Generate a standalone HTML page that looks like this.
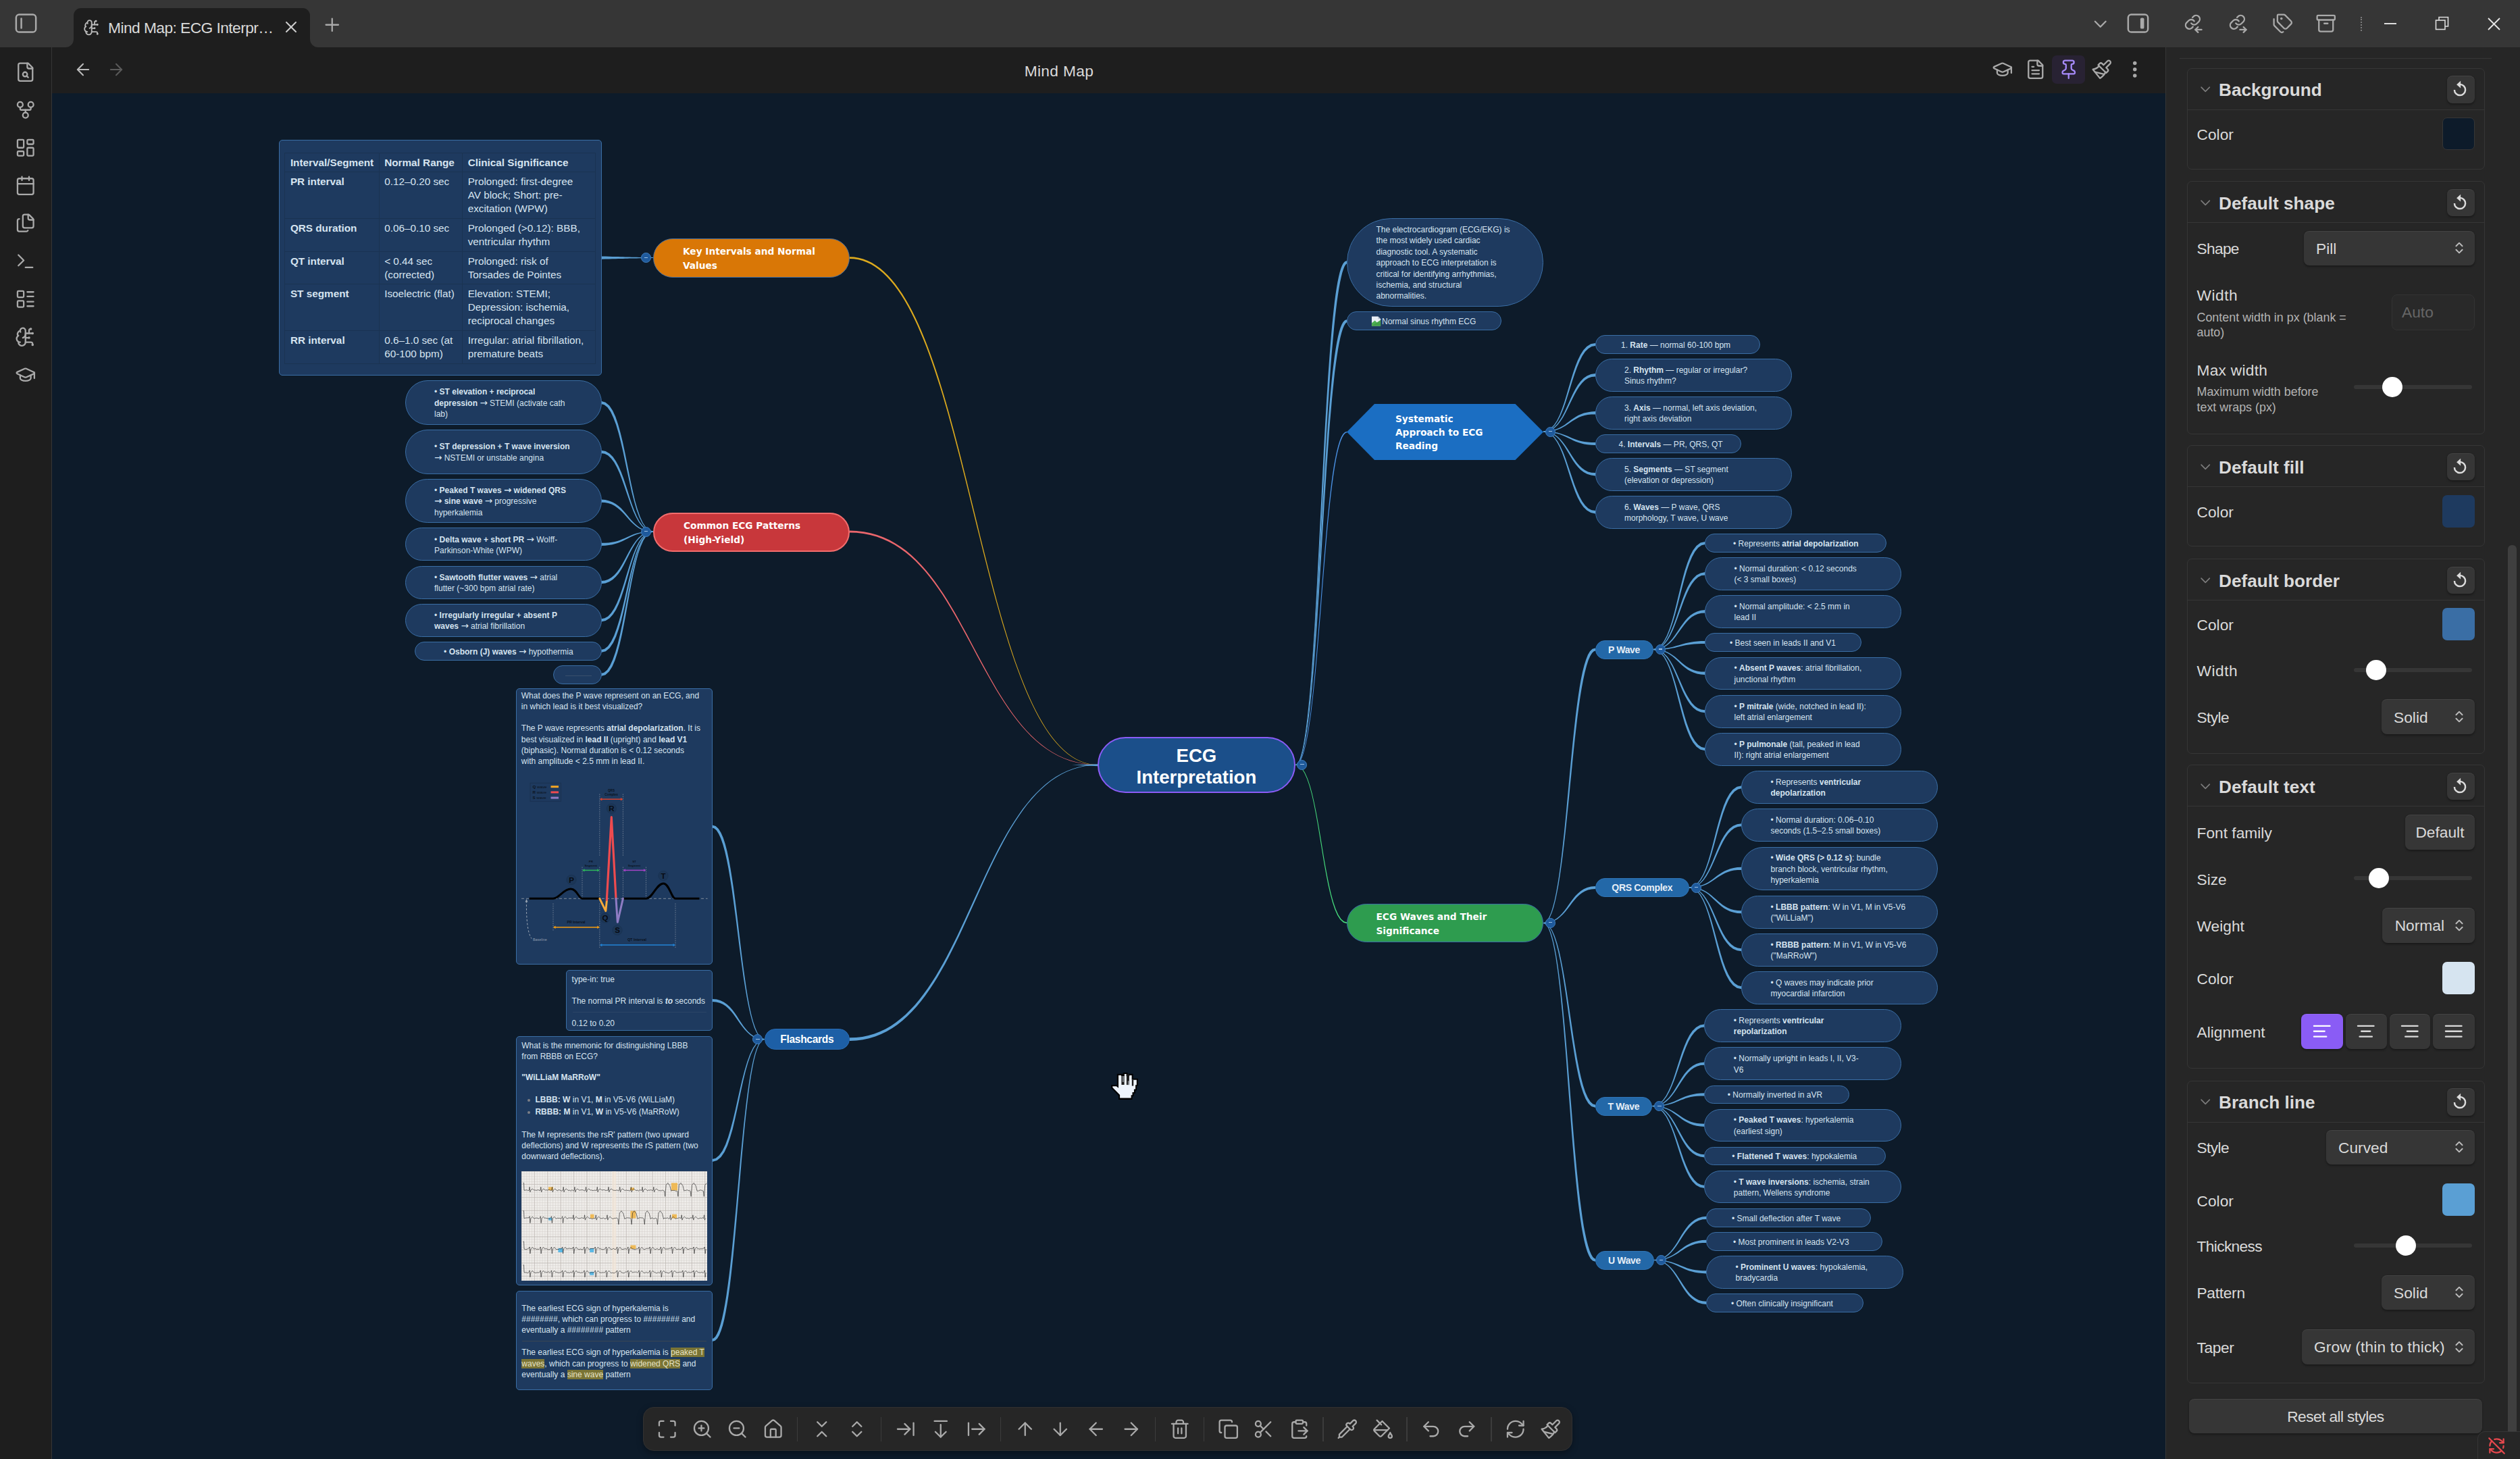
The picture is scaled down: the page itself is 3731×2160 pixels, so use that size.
<!DOCTYPE html><html><head><meta charset="utf-8"><title>Mind Map: ECG Interpretation</title><style>
*{box-sizing:border-box}
html,body{margin:0;padding:0}
body{width:3731px;height:2160px;overflow:hidden;background:#1e1e1e;font-family:"Liberation Sans",sans-serif;color:#dadada;position:relative}
.abs{position:absolute}
.ui{font-size:22.75px;white-space:nowrap;color:#dadada}
.nd{position:absolute;background:#1e3a5f;border:1.5px solid #3a6ea5;color:#d6e4f0;font-size:12px;line-height:16.4px;white-space:nowrap;display:flex;align-items:center;padding-top:2.2px}
.pill{border-radius:999px;padding-left:42px}
.card{border-radius:5px;display:block;padding:0}
.sub{position:absolute;background:#2368a8;border:1.5px solid #2f74b5;border-radius:999px;color:#e6eef7;font-weight:bold;font-size:14px;letter-spacing:-.32px;display:flex;align-items:center;justify-content:center;white-space:nowrap}
.top{position:absolute;border-radius:999px;color:#fff;font-family:"DejaVu Sans",sans-serif;font-weight:bold;font-size:13.7px;line-height:21px;display:flex;align-items:center;white-space:nowrap;padding-left:43px;padding-top:2.5px}
.cc{position:absolute;width:15px;height:15px;border-radius:50%;background:#1f5a9c;border:1.5px solid #3f7fc0}
.cc:after{content:"";position:absolute;left:3.7px;right:3.7px;top:5.4px;height:1.1px;background:#9cc0e4}
b{font-weight:bold}
.pcard{position:absolute;left:3238px;width:441px;border:1.5px solid #363636;border-radius:7px}
.pcard .hd{position:absolute;left:0;right:0;top:0;height:61px;border-bottom:1.5px solid #363636}
.ptitle{position:absolute;left:3285px;font-weight:bold;font-size:26.2px;white-space:nowrap;color:#dadada;line-height:30px}
.plabel{position:absolute;left:3252.5px;font-size:22.75px;white-space:nowrap;color:#dadada;line-height:28px}
.pdesc{position:absolute;left:3252.5px;font-size:17.9px;white-space:nowrap;color:#b3b3b3;line-height:22.7px}
.btn{padding-top:2.5px;position:absolute;background:#363636;border-radius:8px;box-shadow:0 1.5px 3px rgba(0,0,0,.35),inset 0 1px 0 rgba(255,255,255,.07);font-size:22.75px;color:#dadada;white-space:nowrap;display:flex;align-items:center}
.sw{position:absolute;left:3615.5px;width:48px;height:48px;border-radius:7px}
.trk{position:absolute;left:3485px;width:175px;height:6px;border-radius:3px;background:#363636}
.thm{position:absolute;width:30px;height:30px;border-radius:50%;background:#fff}
</style></head><body>
<div class="abs" style="left:0;top:0;width:3731px;height:70px;background:#363636"></div>
<div class="abs" style="left:109px;top:12px;width:350px;height:58px;background:#1e1e1e;border-radius:11px 11px 0 0"></div>
<svg class="abs" style="left:97px;top:58px" width="12" height="12"><path d="M12 0V12H0A12 12 0 0 0 12 0Z" fill="#1e1e1e"/></svg>
<svg class="abs" style="left:459px;top:58px" width="12" height="12"><path d="M0 0V12H12A12 12 0 0 1 0 0Z" fill="#1e1e1e"/></svg>
<svg style="position:absolute;left:20.2px;top:16.1px;color:#aaa;" width="37" height="37" viewBox="0 0 24 24" fill="none" stroke="currentColor" stroke-width="1.6" stroke-linecap="round" stroke-linejoin="round"><rect x="2.5" y="3.5" width="19" height="17" rx="3"/><path d="M7.500 7.500v9"/></svg>
<svg style="position:absolute;left:122.8px;top:27.5px;color:#bbb;" width="25.5" height="25.5" viewBox="0 0 24 24" fill="none" stroke="currentColor" stroke-width="1.75" stroke-linecap="round" stroke-linejoin="round"><path d="M12 5a3 3 0 1 0-5.997.125 4 4 0 0 0-2.526 5.770 4 4 0 0 0 .556 6.588A4 4 0 1 0 12 18Z"/><path d="M9 13a4.500 4.500 0 0 0 3-4"/><path d="M6.003 5.125A3 3 0 0 0 6.401 6.500"/><path d="M3.477 10.896a4 4 0 0 1 .585-.396"/><path d="M6 18a4 4 0 0 1-1.967-.516"/><path d="M12 13h4"/><path d="M12 18h6a2 2 0 0 1 2 2v1"/><path d="M12 8h8"/><path d="M16 8V5a2 2 0 0 1 2-2"/><circle cx="16" cy="13" r=".5"/><circle cx="18" cy="3" r=".5"/><circle cx="20" cy="21" r=".5"/><circle cx="20" cy="8" r=".5"/></svg>
<div class="abs ui" style="left:160px;top:26px;line-height:30px;letter-spacing:-0.55px">Mind Map: ECG Interpr…</div>
<svg style="position:absolute;left:417.0px;top:25.5px;color:#ccc;" width="28" height="28" viewBox="0 0 24 24" fill="none" stroke="currentColor" stroke-width="1.75" stroke-linecap="round" stroke-linejoin="round"><path d="M18 6 6 18"/><path d="m6 6 12 12"/></svg>
<svg style="position:absolute;left:475.8px;top:21.2px;color:#aaa;" width="31.5" height="31.5" viewBox="0 0 24 24" fill="none" stroke="currentColor" stroke-width="1.75" stroke-linecap="round" stroke-linejoin="round"><path d="M5 12h14"/><path d="M12 5v14"/></svg>
<svg style="position:absolute;left:3094.1px;top:19.8px;color:#aaa;" width="31.5" height="31.5" viewBox="0 0 24 24" fill="none" stroke="currentColor" stroke-width="1.75" stroke-linecap="round" stroke-linejoin="round"><path d="m6 9 6 6 6-6"/></svg>
<svg style="position:absolute;left:3147.2px;top:16.1px;color:#aaa;" width="37" height="37" viewBox="0 0 24 24" fill="none" stroke="currentColor" stroke-width="1.6" stroke-linecap="round" stroke-linejoin="round"><rect x="2.5" y="3.500" width="19" height="17" rx="3"/><rect x="14.200" y="6.800" width="3.600" height="10.400" rx="1.200" fill="currentColor" stroke="none"/></svg>
<svg style="position:absolute;left:3231.9px;top:19.2px;color:#aaa;" width="31.5" height="31.5" viewBox="0 0 24 24" fill="none" stroke="currentColor" stroke-width="1.75" stroke-linecap="round" stroke-linejoin="round"><path d="M9.300 11.700a4.200 4.200 0 0 0 6.300.5l2.500-2.500a4.200 4.200 0 0 0-5.900-5.900l-1.450 1.450"/><path d="M12.700 9.300a4.200 4.200 0 0 0-6.300-.5l-2.500 2.500a4.200 4.200 0 0 0 5.900 5.900l1.450-1.450"/><path d="m17 22-3-3 3-3"/><path d="M14 19h7"/></svg>
<svg style="position:absolute;left:3298.1px;top:19.2px;color:#aaa;" width="31.5" height="31.5" viewBox="0 0 24 24" fill="none" stroke="currentColor" stroke-width="1.75" stroke-linecap="round" stroke-linejoin="round"><path d="M9.300 11.700a4.200 4.200 0 0 0 6.300.5l2.500-2.500a4.200 4.200 0 0 0-5.900-5.900l-1.450 1.450"/><path d="M12.700 9.300a4.200 4.200 0 0 0-6.300-.5l-2.500 2.500a4.200 4.200 0 0 0 5.900 5.900l1.450-1.450"/><path d="m18 16 3 3-3 3"/><path d="M14 19h7"/></svg>
<svg style="position:absolute;left:3363.8px;top:19.2px;color:#aaa;" width="31.5" height="31.5" viewBox="0 0 24 24" fill="none" stroke="currentColor" stroke-width="1.75" stroke-linecap="round" stroke-linejoin="round"><path d="M13.172 2a2 2 0 0 1 1.414.586l6.710 6.710a2.400 2.400 0 0 1 0 3.408l-4.592 4.592a2.400 2.400 0 0 1-3.408 0l-6.710-6.710A2 2 0 0 1 6 9.172V3a1 1 0 0 1 1-1z"/><path d="M2 7v6.172a2 2 0 0 0 .586 1.414l6.710 6.710a2.400 2.400 0 0 0 3.191.193"/><circle cx="10.5" cy="6.500" r=".5" fill="currentColor"/></svg>
<svg style="position:absolute;left:3427.7px;top:19.2px;color:#aaa;" width="31.5" height="31.5" viewBox="0 0 24 24" fill="none" stroke="currentColor" stroke-width="1.75" stroke-linecap="round" stroke-linejoin="round"><rect width="20" height="5" x="2" y="3" rx="1"/><path d="M4 8v11a2 2 0 0 0 2 2h12a2 2 0 0 0 2-2V8"/><path d="M10 12h4"/></svg>
<div class="abs" style="left:3495px;top:25px;width:0;height:21px;border-left:2px dotted #7c7c7c"></div>
<div class="abs" style="left:3529.5px;top:34px;width:18px;height:2px;background:#ddd"></div>
<svg class="abs" style="left:3605px;top:24px" width="22" height="22" fill="none" stroke="#ddd" stroke-width="1.6"><rect x="1.5" y="6" width="13.5" height="13.500"/><path d="M6 6V1.500H19.500V15H15"/></svg>
<svg class="abs" style="left:3683px;top:26px" width="19" height="19" fill="none" stroke="#e6e6e6" stroke-width="1.8"><path d="M1 1L18 18M18 1L1 18"/></svg>
<div class="abs" style="left:0;top:70px;width:77px;height:2090px;background:#1e1e1e;border-right:1.5px solid #363636"></div>
<svg style="position:absolute;left:21.9px;top:91.0px;color:#aaa;" width="31.5" height="31.5" viewBox="0 0 24 24" fill="none" stroke="currentColor" stroke-width="1.75" stroke-linecap="round" stroke-linejoin="round"><path d="M15 2H6a2 2 0 0 0-2 2v16a2 2 0 0 0 2 2h12a2 2 0 0 0 2-2V7Z"/><path d="M14 2v4a2 2 0 0 0 2 2h4"/><circle cx="11.5" cy="14.5" r="2.5"/><path d="M13.3 16.3 15 18"/></svg>
<svg style="position:absolute;left:21.9px;top:147.0px;color:#aaa;" width="31.5" height="31.5" viewBox="0 0 24 24" fill="none" stroke="currentColor" stroke-width="1.75" stroke-linecap="round" stroke-linejoin="round"><circle cx="12" cy="18" r="3"/><circle cx="6" cy="6" r="3"/><circle cx="18" cy="6" r="3"/><path d="M18 9v2c0 .6-.4 1-1 1H7c-.6 0-1-.4-1-1V9"/><path d="M12 12v3"/></svg>
<svg style="position:absolute;left:21.9px;top:202.9px;color:#aaa;" width="31.5" height="31.5" viewBox="0 0 24 24" fill="none" stroke="currentColor" stroke-width="1.75" stroke-linecap="round" stroke-linejoin="round"><rect width="7" height="9" x="3" y="3" rx="1"/><rect width="7" height="5" x="14" y="3" rx="1"/><rect width="7" height="9" x="14" y="12" rx="1"/><rect width="7" height="5" x="3" y="16" rx="1"/></svg>
<svg style="position:absolute;left:21.9px;top:258.9px;color:#aaa;" width="31.5" height="31.5" viewBox="0 0 24 24" fill="none" stroke="currentColor" stroke-width="1.75" stroke-linecap="round" stroke-linejoin="round"><path d="M8 2v4"/><path d="M16 2v4"/><rect width="18" height="18" x="3" y="4" rx="2"/><path d="M3 10h18"/></svg>
<svg style="position:absolute;left:21.9px;top:314.9px;color:#aaa;" width="31.5" height="31.5" viewBox="0 0 24 24" fill="none" stroke="currentColor" stroke-width="1.75" stroke-linecap="round" stroke-linejoin="round"><path d="M15 2a2 2 0 0 1 1.414.586l4 4A2 2 0 0 1 21 8v7a2 2 0 0 1-2 2h-8a2 2 0 0 1-2-2V4a2 2 0 0 1 2-2z"/><path d="M15 2v4a2 2 0 0 0 2 2h4"/><path d="M5 7a2 2 0 0 0-2 2v10a2 2 0 0 0 2 2h8a2 2 0 0 0 1.732-1"/></svg>
<svg style="position:absolute;left:21.9px;top:370.8px;color:#aaa;" width="31.5" height="31.5" viewBox="0 0 24 24" fill="none" stroke="currentColor" stroke-width="1.75" stroke-linecap="round" stroke-linejoin="round"><polyline points="4 17 10 11 4 5"/><line x1="12" x2="20" y1="19" y2="19"/></svg>
<svg style="position:absolute;left:21.9px;top:426.8px;color:#aaa;" width="31.5" height="31.5" viewBox="0 0 24 24" fill="none" stroke="currentColor" stroke-width="1.75" stroke-linecap="round" stroke-linejoin="round"><rect width="7" height="7" x="3" y="3" rx="1"/><rect width="7" height="7" x="3" y="14" rx="1"/><path d="M14 4h7"/><path d="M14 9h7"/><path d="M14 15h7"/><path d="M14 20h7"/></svg>
<svg style="position:absolute;left:21.9px;top:482.7px;color:#aaa;" width="31.5" height="31.5" viewBox="0 0 24 24" fill="none" stroke="currentColor" stroke-width="1.75" stroke-linecap="round" stroke-linejoin="round"><path d="M12 5a3 3 0 1 0-5.997.125 4 4 0 0 0-2.526 5.770 4 4 0 0 0 .556 6.588A4 4 0 1 0 12 18Z"/><path d="M9 13a4.500 4.500 0 0 0 3-4"/><path d="M6.003 5.125A3 3 0 0 0 6.401 6.500"/><path d="M3.477 10.896a4 4 0 0 1 .585-.396"/><path d="M6 18a4 4 0 0 1-1.967-.516"/><path d="M12 13h4"/><path d="M12 18h6a2 2 0 0 1 2 2v1"/><path d="M12 8h8"/><path d="M16 8V5a2 2 0 0 1 2-2"/><circle cx="16" cy="13" r=".5"/><circle cx="18" cy="3" r=".5"/><circle cx="20" cy="21" r=".5"/><circle cx="20" cy="8" r=".5"/></svg>
<svg style="position:absolute;left:21.9px;top:538.6px;color:#aaa;" width="31.5" height="31.5" viewBox="0 0 24 24" fill="none" stroke="currentColor" stroke-width="1.75" stroke-linecap="round" stroke-linejoin="round"><path d="M21.420 10.922a1 1 0 0 0-.019-1.838L12.830 5.180a2 2 0 0 0-1.660 0L2.600 9.080a1 1 0 0 0 0 1.832l8.570 3.908a2 2 0 0 0 1.660 0z"/><path d="M22 10v6"/><path d="M6 12.500V16a6 3 0 0 0 12 0v-3.500"/></svg>
<div class="abs" style="left:77px;top:70px;width:3129px;height:68px;background:#1e1e1e"></div>
<svg style="position:absolute;left:108.8px;top:89.0px;color:#bbb;" width="28" height="28" viewBox="0 0 24 24" fill="none" stroke="currentColor" stroke-width="1.75" stroke-linecap="round" stroke-linejoin="round"><path d="m12 19-7-7 7-7"/><path d="M19 12H5"/></svg>
<svg style="position:absolute;left:157.6px;top:89.0px;color:#5a5a5a;" width="28" height="28" viewBox="0 0 24 24" fill="none" stroke="currentColor" stroke-width="1.75" stroke-linecap="round" stroke-linejoin="round"><path d="M5 12h14"/><path d="m12 5 7 7-7 7"/></svg>
<div class="abs ui" style="left:1468px;width:200px;text-align:center;top:90px;line-height:30px;letter-spacing:.35px">Mind Map</div>
<svg style="position:absolute;left:2949.2px;top:87.2px;color:#aaa;" width="31.5" height="31.5" viewBox="0 0 24 24" fill="none" stroke="currentColor" stroke-width="1.75" stroke-linecap="round" stroke-linejoin="round"><path d="M21.420 10.922a1 1 0 0 0-.019-1.838L12.830 5.180a2 2 0 0 0-1.660 0L2.600 9.080a1 1 0 0 0 0 1.832l8.570 3.908a2 2 0 0 0 1.660 0z"/><path d="M22 10v6"/><path d="M6 12.500V16a6 3 0 0 0 12 0v-3.500"/></svg>
<svg style="position:absolute;left:2998.2px;top:87.2px;color:#aaa;" width="31.5" height="31.5" viewBox="0 0 24 24" fill="none" stroke="currentColor" stroke-width="1.75" stroke-linecap="round" stroke-linejoin="round"><path d="M15 2H6a2 2 0 0 0-2 2v16a2 2 0 0 0 2 2h12a2 2 0 0 0 2-2V7Z"/><path d="M14 2v4a2 2 0 0 0 2 2h4"/><path d="M10 9H8"/><path d="M16 13H8"/><path d="M16 17H8"/></svg>
<div class="abs" style="left:3038px;top:82px;width:49px;height:42px;border-radius:7px;background:#282233"></div>
<svg style="position:absolute;left:3046.9px;top:87.2px;color:#a78bfa;" width="31.5" height="31.5" viewBox="0 0 24 24" fill="none" stroke="currentColor" stroke-width="1.75" stroke-linecap="round" stroke-linejoin="round"><path d="M12 17v5"/><path d="M9 10.760a2 2 0 0 1-1.110 1.790l-1.780.9A2 2 0 0 0 5 15.240V16a1 1 0 0 0 1 1h12a1 1 0 0 0 1-1v-.760a2 2 0 0 0-1.110-1.790l-1.780-.9A2 2 0 0 1 15 10.760V7a1 1 0 0 1 1-1 2 2 0 0 0 0-4H8a2 2 0 0 0 0 4 1 1 0 0 1 1 1z"/></svg>
<svg style="position:absolute;left:3096.2px;top:87.2px;color:#aaa;" width="31.5" height="31.5" viewBox="0 0 24 24" fill="none" stroke="currentColor" stroke-width="1.75" stroke-linecap="round" stroke-linejoin="round"><path d="M18.370 2.630 14 7l-1.590-1.590a2 2 0 0 0-2.820 0L8 7l9 9 1.590-1.590a2 2 0 0 0 0-2.820L17 10l4.370-4.370a2.120 2.120 0 1 0-3-3Z"/><path d="M9 8c-2 3-4 3.500-7 4l8 10c2-1 6-5 6-7"/><path d="M14.500 17.500 4.500 15"/></svg>
<svg style="position:absolute;left:3145.2px;top:87.2px;color:#aaa;" width="31.5" height="31.5" viewBox="0 0 24 24" fill="none" stroke="currentColor" stroke-width="2.2" stroke-linecap="round" stroke-linejoin="round"><circle cx="12" cy="12" r="1"/><circle cx="12" cy="5" r="1"/><circle cx="12" cy="19" r="1"/></svg>
<div class="abs" style="left:77px;top:138px;width:3129px;height:2022px;background:#0d1b2a;overflow:hidden"></div>
<svg class="abs" style="left:0;top:0;pointer-events:none" width="3206" height="2160"><path d="M1625.6 1132.1L1618.7 1131.7L1612.0 1130.7L1605.5 1128.9L1599.1 1126.5L1592.9 1123.5L1586.9 1119.8L1581.0 1115.5L1575.2 1110.6L1569.6 1105.1L1564.1 1099.1L1558.7 1092.6L1553.5 1085.5L1548.4 1077.9L1543.4 1069.8L1538.5 1061.3L1533.7 1052.3L1529.1 1042.9L1524.5 1033.1L1520.0 1022.8L1515.7 1012.2L1511.4 1001.3L1507.2 990.0L1503.0 978.4L1499.0 966.5L1495.0 954.3L1491.1 941.8L1487.2 929.1L1483.4 916.2L1479.6 903.0L1475.9 889.7L1472.3 876.2L1468.7 862.5L1465.1 848.7L1461.5 834.7L1458.0 820.7L1454.4 806.6L1450.9 792.4L1447.5 778.2L1444.0 764.0L1440.5 749.7L1437.0 735.5L1433.5 721.2L1430.0 707.1L1426.5 692.9L1423.0 678.9L1419.4 665.0L1415.8 651.2L1412.2 637.5L1408.5 624.0L1404.8 610.6L1401.1 597.4L1397.3 584.5L1393.4 571.8L1389.5 559.3L1385.5 547.1L1381.4 535.1L1377.3 523.5L1373.1 512.2L1368.8 501.2L1364.4 490.6L1359.9 480.3L1355.4 470.5L1350.7 461.0L1345.9 452.0L1341.0 443.4L1336.0 435.3L1330.8 427.7L1325.6 420.5L1320.2 413.9L1314.6 407.8L1308.9 402.2L1303.1 397.3L1297.1 392.9L1290.9 389.1L1284.6 386.0L1278.1 383.5L1271.4 381.7L1264.5 380.6L1257.5 380.2L1257.5 383.0L1264.3 383.3L1270.9 384.3L1277.3 386.0L1283.6 388.4L1289.7 391.3L1295.7 395.0L1301.6 399.2L1307.3 404.0L1312.9 409.4L1318.4 415.4L1323.8 421.9L1329.0 429.0L1334.1 436.5L1339.1 444.5L1344.0 453.0L1348.8 462.0L1353.5 471.4L1358.1 481.2L1362.5 491.4L1366.9 502.0L1371.3 512.9L1375.5 524.2L1379.6 535.8L1383.7 547.7L1387.7 559.9L1391.7 572.3L1395.6 585.0L1399.4 597.9L1403.2 611.1L1406.9 624.4L1410.6 637.9L1414.2 651.6L1417.9 665.4L1421.5 679.3L1425.0 693.3L1428.6 707.4L1432.1 721.6L1435.6 735.8L1439.1 750.0L1442.6 764.3L1446.1 778.5L1449.7 792.8L1453.2 806.9L1456.7 821.0L1460.3 835.1L1463.9 849.0L1467.5 862.8L1471.1 876.5L1474.8 890.0L1478.6 903.3L1482.3 916.5L1486.2 929.4L1490.1 942.1L1494.0 954.6L1498.0 966.8L1502.1 978.7L1506.3 990.3L1510.5 1001.6L1514.8 1012.6L1519.2 1023.2L1523.7 1033.4L1528.3 1043.2L1533.0 1052.7L1537.8 1061.7L1542.7 1070.2L1547.7 1078.3L1552.9 1085.9L1558.1 1093.0L1563.5 1099.6L1569.1 1105.6L1574.7 1111.1L1580.5 1116.0L1586.5 1120.3L1592.6 1124.0L1598.9 1127.1L1605.3 1129.5L1611.9 1131.3L1618.7 1132.3L1625.6 1132.7Z" fill="#dcaa1e"/><path d="M1625.6 1132.1L1614.8 1131.7L1604.4 1130.5L1594.5 1128.5L1584.9 1125.8L1575.7 1122.4L1566.8 1118.4L1558.3 1113.7L1550.1 1108.4L1542.2 1102.5L1534.6 1096.2L1527.2 1089.3L1520.1 1082.0L1513.3 1074.2L1506.6 1066.0L1500.1 1057.5L1493.8 1048.6L1487.7 1039.5L1481.7 1030.0L1475.8 1020.4L1470.1 1010.5L1464.4 1000.5L1458.8 990.3L1453.2 980.1L1447.7 969.7L1442.2 959.4L1436.7 949.0L1431.2 938.6L1425.6 928.4L1420.0 918.2L1414.3 908.1L1408.5 898.3L1402.7 888.6L1396.7 879.1L1390.5 869.9L1384.2 861.0L1377.7 852.4L1371.0 844.2L1364.1 836.4L1356.9 829.0L1349.5 822.1L1341.9 815.6L1333.9 809.7L1325.6 804.4L1317.0 799.6L1308.1 795.5L1298.7 792.0L1289.0 789.3L1278.9 787.2L1268.4 786.0L1257.5 785.5L1257.5 788.5L1268.2 788.8L1278.5 790.0L1288.4 791.9L1297.9 794.5L1307.1 797.9L1315.9 801.9L1324.4 806.5L1332.5 811.7L1340.4 817.5L1348.0 823.8L1355.4 830.6L1362.5 837.9L1369.4 845.6L1376.1 853.7L1382.6 862.2L1388.9 871.0L1395.1 880.1L1401.1 889.5L1407.0 899.2L1412.8 909.0L1418.5 919.0L1424.2 929.2L1429.8 939.4L1435.4 949.7L1440.9 960.0L1446.4 970.4L1452.0 980.7L1457.6 991.0L1463.3 1001.1L1469.0 1011.1L1474.8 1021.0L1480.7 1030.6L1486.8 1040.1L1493.0 1049.2L1499.3 1058.1L1505.8 1066.6L1512.5 1074.8L1519.5 1082.6L1526.6 1089.9L1534.0 1096.8L1541.7 1103.2L1549.7 1109.0L1557.9 1114.3L1566.5 1119.0L1575.4 1123.0L1584.7 1126.4L1594.3 1129.1L1604.3 1131.1L1614.8 1132.3L1625.6 1132.7Z" fill="#ea666c"/><path d="M1625.6 1132.1L1615.7 1132.4L1606.2 1133.6L1597.0 1135.5L1588.1 1138.2L1579.6 1141.5L1571.3 1145.5L1563.3 1150.1L1555.6 1155.3L1548.2 1161.1L1541.0 1167.4L1534.0 1174.3L1527.2 1181.6L1520.7 1189.4L1514.3 1197.6L1508.2 1206.2L1502.2 1215.2L1496.3 1224.5L1490.6 1234.1L1485.0 1244.0L1479.5 1254.1L1474.1 1264.4L1468.9 1275.0L1463.6 1285.7L1458.5 1296.5L1453.4 1307.5L1448.3 1318.5L1443.2 1329.5L1438.2 1340.6L1433.1 1351.6L1428.1 1362.6L1422.9 1373.5L1417.8 1384.4L1412.6 1395.0L1407.3 1405.6L1401.9 1415.9L1396.5 1426.0L1390.9 1435.8L1385.2 1445.4L1379.4 1454.6L1373.4 1463.5L1367.2 1472.1L1360.9 1480.2L1354.4 1487.9L1347.7 1495.1L1340.8 1501.9L1333.7 1508.1L1326.4 1513.8L1318.8 1518.9L1311.0 1523.4L1302.8 1527.3L1294.5 1530.5L1285.8 1533.0L1276.8 1534.9L1267.5 1536.0L1257.8 1536.3L1257.8 1540.9L1267.8 1540.4L1277.5 1539.2L1286.8 1537.2L1295.8 1534.5L1304.5 1531.0L1312.8 1526.9L1320.9 1522.2L1328.6 1516.9L1336.1 1511.0L1343.3 1504.5L1350.3 1497.6L1357.0 1490.2L1363.6 1482.3L1369.9 1474.0L1376.0 1465.3L1382.0 1456.3L1387.8 1447.0L1393.4 1437.3L1399.0 1427.4L1404.4 1417.2L1409.7 1406.8L1414.9 1396.2L1420.1 1385.5L1425.2 1374.6L1430.2 1363.6L1435.2 1352.6L1440.2 1341.5L1445.2 1330.4L1450.2 1319.3L1455.2 1308.3L1460.2 1297.3L1465.3 1286.5L1470.5 1275.8L1475.7 1265.2L1481.0 1254.9L1486.4 1244.7L1491.9 1234.8L1497.5 1225.2L1503.3 1215.9L1509.3 1206.9L1515.4 1198.3L1521.6 1190.1L1528.1 1182.4L1534.8 1175.0L1541.7 1168.2L1548.8 1161.9L1556.2 1156.1L1563.8 1150.9L1571.7 1146.2L1579.9 1142.2L1588.4 1138.9L1597.2 1136.3L1606.3 1134.3L1615.8 1133.2L1625.6 1132.8Z" fill="#5a9fd4"/><path d="M1587 1132.6L1626 1131.300V1134.200Z" fill="#5a9fd4"/><path d="M1918.0 1132.8L1920.2 1132.1L1922.2 1130.0L1924.0 1126.8L1925.8 1122.4L1927.5 1116.9L1929.2 1110.3L1930.8 1102.6L1932.3 1093.9L1933.8 1084.3L1935.3 1073.7L1936.7 1062.3L1938.1 1050.1L1939.4 1037.0L1940.7 1023.3L1942.0 1008.8L1943.2 993.8L1944.4 978.1L1945.6 961.9L1946.7 945.1L1947.8 928.0L1948.9 910.4L1950.0 892.4L1951.1 874.1L1952.1 855.6L1953.2 836.8L1954.2 817.8L1955.2 798.7L1956.3 779.5L1957.3 760.3L1958.3 741.0L1959.3 721.8L1960.4 702.7L1961.4 683.7L1962.4 665.0L1963.5 646.4L1964.6 628.1L1965.7 610.2L1966.8 592.6L1967.9 575.4L1969.1 558.7L1970.2 542.5L1971.4 526.8L1972.7 511.7L1974.0 497.3L1975.3 483.6L1976.6 470.6L1978.0 458.4L1979.4 447.0L1980.9 436.5L1982.4 426.9L1984.0 418.3L1985.6 410.7L1987.2 404.1L1988.9 398.8L1990.6 394.6L1992.3 391.8L1993.7 390.4L1994.5 390.1L1994.5 385.9L1991.4 387.0L1989.0 389.4L1987.1 392.9L1985.3 397.5L1983.6 403.1L1982.0 409.8L1980.4 417.6L1978.9 426.3L1977.4 436.0L1976.0 446.5L1974.7 458.0L1973.4 470.2L1972.1 483.3L1970.9 497.0L1969.7 511.5L1968.5 526.6L1967.4 542.3L1966.2 558.5L1965.2 575.2L1964.1 592.4L1963.1 610.0L1962.0 628.0L1961.0 646.3L1960.0 664.8L1959.1 683.6L1958.1 702.6L1957.1 721.7L1956.2 740.9L1955.2 760.1L1954.2 779.4L1953.3 798.6L1952.3 817.7L1951.3 836.7L1950.4 855.5L1949.4 874.0L1948.4 892.3L1947.3 910.3L1946.3 927.9L1945.2 945.0L1944.1 961.8L1943.0 978.0L1941.9 993.7L1940.7 1008.7L1939.5 1023.2L1938.2 1036.9L1936.9 1049.9L1935.6 1062.2L1934.2 1073.6L1932.8 1084.1L1931.3 1093.7L1929.8 1102.4L1928.3 1110.0L1926.6 1116.6L1925.0 1122.1L1923.3 1126.4L1921.5 1129.6L1919.7 1131.4L1918.0 1132.0Z" fill="#5a9fd4"/><path d="M1918.0 1132.8L1920.4 1132.0L1922.6 1129.8L1924.6 1126.3L1926.6 1121.5L1928.5 1115.5L1930.3 1108.3L1932.0 1100.0L1933.7 1090.6L1935.4 1080.2L1936.9 1068.9L1938.5 1056.7L1939.9 1043.6L1941.4 1029.7L1942.7 1015.2L1944.1 999.9L1945.4 984.0L1946.7 967.6L1947.9 950.7L1949.2 933.3L1950.4 915.5L1951.5 897.4L1952.7 879.0L1953.9 860.4L1955.0 841.6L1956.2 822.7L1957.3 803.8L1958.4 784.8L1959.6 765.9L1960.7 747.1L1961.9 728.5L1963.1 710.1L1964.2 692.0L1965.5 674.3L1966.7 656.9L1967.9 639.9L1969.2 623.5L1970.6 607.7L1971.9 592.4L1973.3 577.9L1974.8 564.0L1976.2 551.0L1977.8 538.8L1979.4 527.5L1981.0 517.2L1982.7 507.9L1984.5 499.6L1986.3 492.6L1988.1 486.7L1990.0 482.2L1991.9 479.0L1993.5 477.4L1994.5 477.1L1994.5 472.9L1991.2 474.0L1988.6 476.7L1986.5 480.5L1984.5 485.4L1982.7 491.6L1980.9 498.8L1979.2 507.2L1977.6 516.6L1976.0 527.0L1974.5 538.4L1973.0 550.6L1971.6 563.7L1970.3 577.6L1968.9 592.2L1967.7 607.4L1966.4 623.3L1965.2 639.7L1964.0 656.7L1962.9 674.1L1961.7 691.9L1960.6 710.0L1959.5 728.4L1958.4 747.0L1957.3 765.8L1956.3 784.7L1955.2 803.6L1954.1 822.6L1953.1 841.5L1952.0 860.3L1950.9 878.9L1949.8 897.3L1948.7 915.4L1947.5 933.2L1946.4 950.6L1945.2 967.5L1943.9 983.9L1942.7 999.8L1941.4 1015.0L1940.1 1029.6L1938.7 1043.5L1937.3 1056.5L1935.8 1068.7L1934.3 1080.1L1932.7 1090.4L1931.1 1099.8L1929.4 1108.1L1927.6 1115.2L1925.8 1121.2L1923.9 1125.9L1921.9 1129.3L1919.9 1131.3L1918.0 1132.0Z" fill="#5a9fd4"/><path d="M1918.0 1132.8L1921.0 1131.8L1923.8 1129.1L1926.4 1124.7L1928.8 1118.7L1931.1 1111.3L1933.3 1102.6L1935.4 1092.5L1937.4 1081.2L1939.3 1068.8L1941.2 1055.4L1942.9 1041.1L1944.6 1026.0L1946.3 1010.1L1947.9 993.6L1949.4 976.5L1950.9 958.9L1952.4 941.0L1953.9 922.8L1955.4 904.5L1956.8 886.0L1958.2 867.5L1959.7 849.2L1961.2 831.0L1962.7 813.1L1964.2 795.5L1965.7 778.4L1967.3 761.9L1969.0 746.0L1970.7 730.9L1972.5 716.6L1974.3 703.2L1976.2 690.9L1978.2 679.6L1980.3 669.6L1982.5 660.9L1984.8 653.5L1987.2 647.7L1989.7 643.5L1992.1 641.1L1994.5 640.3L1994.5 638.7L1991.3 639.8L1988.4 642.6L1985.8 647.1L1983.4 653.1L1981.1 660.5L1978.9 669.3L1976.8 679.4L1974.8 690.6L1972.9 703.0L1971.1 716.4L1969.4 730.7L1967.7 745.9L1966.1 761.8L1964.5 778.3L1963.0 795.4L1961.5 813.0L1960.0 830.9L1958.6 849.1L1957.1 867.4L1955.7 885.9L1954.3 904.4L1952.8 922.8L1951.4 940.9L1949.9 958.9L1948.4 976.4L1946.9 993.5L1945.3 1010.0L1943.7 1025.9L1942.0 1041.0L1940.3 1055.3L1938.4 1068.7L1936.5 1081.1L1934.5 1092.3L1932.5 1102.4L1930.3 1111.1L1928.0 1118.5L1925.6 1124.3L1923.1 1128.6L1920.6 1131.2L1918.0 1132.0Z" fill="#4a90e2"/><path d="M1918.0 1132.8L1922.8 1134.2L1927.2 1138.1L1931.3 1144.5L1935.1 1153.0L1938.6 1163.3L1941.9 1175.2L1944.9 1188.5L1947.7 1202.8L1950.5 1217.9L1953.1 1233.6L1955.7 1249.5L1958.3 1265.4L1960.9 1281.1L1963.7 1296.2L1966.5 1310.5L1969.6 1323.8L1972.8 1335.8L1976.3 1346.3L1980.2 1354.9L1984.4 1361.4L1989.1 1365.7L1994.5 1367.2L1994.5 1365.6L1989.9 1364.3L1985.5 1360.5L1981.4 1354.2L1977.6 1345.8L1974.1 1335.4L1970.8 1323.5L1967.8 1310.3L1964.9 1296.0L1962.1 1280.9L1959.4 1265.2L1956.8 1249.3L1954.2 1233.4L1951.5 1217.8L1948.7 1202.6L1945.8 1188.3L1942.8 1175.0L1939.5 1163.0L1935.9 1152.6L1932.1 1144.1L1927.9 1137.6L1923.2 1133.5L1918.0 1132.0Z" fill="#46d97b"/><path d="M2285.0 639.5L2291.3 638.3L2296.9 635.0L2301.9 629.8L2306.4 623.1L2310.5 615.0L2314.3 605.9L2317.9 595.9L2321.2 585.5L2324.6 574.8L2327.9 564.1L2331.3 553.8L2334.8 543.9L2338.6 534.9L2342.6 527.1L2347.0 520.6L2351.7 515.9L2356.6 513.0L2362.0 512.1L2362.0 507.9L2355.2 509.3L2349.3 513.0L2344.2 518.5L2339.8 525.5L2335.8 533.7L2332.2 543.0L2328.8 552.9L2325.6 563.4L2322.4 574.2L2319.3 584.9L2316.1 595.4L2312.7 605.3L2309.1 614.4L2305.2 622.4L2300.9 629.1L2296.1 634.1L2290.9 637.4L2285.0 638.5Z" fill="#5a9fd4"/><path d="M2285.0 639.5L2291.2 638.8L2296.8 636.6L2301.8 633.3L2306.3 628.9L2310.5 623.6L2314.3 617.7L2317.8 611.3L2321.2 604.5L2324.5 597.6L2327.8 590.7L2331.2 584.0L2334.7 577.7L2338.4 571.9L2342.4 566.9L2346.7 562.8L2351.4 559.8L2356.4 557.9L2362.0 557.4L2362.0 553.1L2355.4 554.1L2349.6 556.5L2344.5 560.1L2340.0 564.8L2335.9 570.2L2332.3 576.3L2328.9 582.8L2325.6 589.7L2322.5 596.7L2319.4 603.6L2316.2 610.4L2312.8 616.9L2309.2 622.8L2305.3 628.0L2301.0 632.3L2296.2 635.6L2290.9 637.7L2285.0 638.5Z" fill="#5a9fd4"/><path d="M2285.0 639.5L2291.1 639.3L2296.6 638.6L2301.6 637.6L2306.1 636.1L2310.2 634.5L2313.9 632.5L2317.5 630.4L2320.9 628.3L2324.1 626.0L2327.4 623.8L2330.7 621.7L2334.2 619.7L2337.8 617.8L2341.8 616.3L2346.1 615.0L2350.8 614.0L2356.1 613.5L2362.0 613.4L2362.0 609.1L2355.8 609.5L2350.2 610.4L2345.1 611.6L2340.6 613.2L2336.5 615.1L2332.8 617.2L2329.3 619.5L2326.0 621.8L2322.9 624.2L2319.7 626.6L2316.5 628.9L2313.1 631.1L2309.5 633.1L2305.6 634.8L2301.2 636.3L2296.4 637.5L2291.0 638.2L2285.0 638.5Z" fill="#5a9fd4"/><path d="M2285.0 639.5L2291.0 639.7L2296.4 640.2L2301.3 641.0L2305.6 641.9L2309.6 643.1L2313.2 644.5L2316.6 645.9L2319.9 647.4L2323.0 649.0L2326.2 650.6L2329.5 652.2L2333.0 653.7L2336.7 655.1L2340.8 656.3L2345.3 657.4L2350.3 658.2L2355.8 658.8L2362.0 659.1L2362.0 654.9L2356.0 654.9L2350.7 654.5L2345.9 654.0L2341.6 653.2L2337.6 652.2L2334.0 651.0L2330.5 649.8L2327.2 648.4L2324.0 647.0L2320.7 645.6L2317.3 644.2L2313.8 642.9L2310.1 641.7L2306.0 640.6L2301.5 639.7L2296.6 639.0L2291.1 638.6L2285.0 638.5Z" fill="#5a9fd4"/><path d="M2285.0 639.5L2291.0 640.1L2296.3 641.7L2301.1 644.2L2305.4 647.5L2309.3 651.4L2312.8 655.9L2316.2 660.8L2319.4 665.9L2322.6 671.2L2325.7 676.5L2328.9 681.7L2332.4 686.7L2336.1 691.3L2340.1 695.5L2344.7 699.0L2349.8 701.8L2355.6 703.6L2362.0 704.4L2362.0 700.1L2356.3 699.7L2351.2 698.4L2346.5 696.1L2342.3 693.0L2338.3 689.3L2334.6 685.0L2331.1 680.3L2327.7 675.2L2324.4 670.0L2321.1 664.8L2317.7 659.7L2314.2 654.9L2310.4 650.4L2306.3 646.5L2301.7 643.2L2296.7 640.6L2291.2 639.0L2285.0 638.5Z" fill="#5a9fd4"/><path d="M2285.0 639.5L2290.9 640.6L2296.2 643.5L2300.9 648.2L2305.2 654.4L2309.1 661.8L2312.7 670.2L2316.1 679.4L2319.3 689.0L2322.4 699.0L2325.6 708.9L2328.8 718.6L2332.2 727.9L2335.8 736.4L2339.8 744.0L2344.3 750.5L2349.4 755.6L2355.3 759.0L2362.0 760.4L2362.0 756.1L2356.6 755.3L2351.6 752.7L2346.9 748.3L2342.6 742.4L2338.5 735.1L2334.8 726.8L2331.2 717.7L2327.9 708.1L2324.6 698.3L2321.2 688.4L2317.9 678.8L2314.3 669.6L2310.5 661.2L2306.4 653.7L2301.9 647.4L2296.9 642.6L2291.3 639.6L2285.0 638.5Z" fill="#5a9fd4"/><path d="M2285.0 1366.9L2288.6 1365.8L2291.8 1362.7L2294.8 1357.7L2297.7 1351.1L2300.3 1342.9L2302.8 1333.2L2305.2 1322.1L2307.5 1309.8L2309.6 1296.4L2311.7 1282.0L2313.7 1266.8L2315.6 1250.8L2317.5 1234.2L2319.3 1217.1L2321.1 1199.6L2322.9 1181.9L2324.6 1164.1L2326.4 1146.2L2328.1 1128.5L2329.9 1111.0L2331.7 1094.0L2333.6 1077.4L2335.5 1061.4L2337.5 1046.2L2339.6 1031.8L2341.8 1018.5L2344.1 1006.2L2346.5 995.3L2349.0 985.7L2351.6 977.6L2354.4 971.2L2357.2 966.7L2359.8 964.2L2362.0 963.6L2362.0 959.4L2357.6 960.8L2354.0 964.3L2350.9 969.6L2348.2 976.4L2345.6 984.7L2343.1 994.5L2340.8 1005.6L2338.6 1017.9L2336.6 1031.4L2334.6 1045.8L2332.7 1061.0L2330.9 1077.1L2329.1 1093.7L2327.4 1110.8L2325.7 1128.3L2324.0 1146.0L2322.4 1163.8L2320.7 1181.7L2319.1 1199.4L2317.4 1216.9L2315.7 1234.0L2313.9 1250.6L2312.1 1266.6L2310.2 1281.8L2308.2 1296.2L2306.1 1309.6L2303.9 1321.8L2301.6 1332.9L2299.1 1342.5L2296.6 1350.7L2293.8 1357.3L2291.0 1362.0L2288.0 1364.9L2285.0 1365.9Z" fill="#5a9fd4"/><path d="M2285.0 1366.9L2291.2 1366.5L2296.7 1365.1L2301.7 1363.1L2306.2 1360.4L2310.3 1357.1L2314.1 1353.4L2317.7 1349.4L2321.1 1345.2L2324.4 1340.9L2327.7 1336.6L2331.0 1332.4L2334.5 1328.5L2338.2 1325.0L2342.1 1321.9L2346.4 1319.4L2351.1 1317.6L2356.2 1316.4L2362.0 1316.1L2362.0 1311.9L2355.6 1312.5L2349.9 1314.0L2344.8 1316.3L2340.2 1319.3L2336.2 1322.8L2332.4 1326.6L2329.0 1330.8L2325.8 1335.1L2322.6 1339.5L2319.5 1343.9L2316.3 1348.2L2312.9 1352.2L2309.3 1356.0L2305.4 1359.2L2301.1 1362.0L2296.3 1364.1L2291.0 1365.4L2285.0 1365.9Z" fill="#5a9fd4"/><path d="M2285.0 1366.9L2289.3 1368.2L2293.4 1372.1L2297.3 1378.3L2300.8 1386.7L2304.1 1397.0L2307.1 1408.9L2310.0 1422.3L2312.7 1436.9L2315.2 1452.4L2317.7 1468.6L2320.1 1485.2L2322.4 1502.2L2324.7 1519.1L2327.1 1535.8L2329.6 1552.0L2332.1 1567.5L2334.8 1582.1L2337.6 1595.6L2340.7 1607.7L2344.0 1618.1L2347.6 1626.8L2351.6 1633.4L2356.3 1637.9L2362.0 1639.7L2362.0 1635.5L2358.4 1634.5L2354.6 1631.1L2350.8 1625.1L2347.2 1616.9L2343.8 1606.7L2340.7 1594.9L2337.7 1581.6L2334.9 1567.0L2332.2 1551.6L2329.6 1535.4L2327.1 1518.7L2324.6 1501.8L2322.1 1484.9L2319.6 1468.3L2317.0 1452.1L2314.3 1436.6L2311.5 1422.0L2308.6 1408.6L2305.4 1396.6L2302.0 1386.3L2298.3 1377.8L2294.3 1371.4L2289.9 1367.3L2285.0 1365.9Z" fill="#5a9fd4"/><path d="M2285.0 1366.9L2287.5 1367.7L2290.0 1370.2L2292.4 1374.3L2294.7 1379.9L2296.9 1387.0L2299.1 1395.5L2301.1 1405.2L2303.1 1416.1L2304.9 1428.1L2306.7 1441.1L2308.4 1455.0L2310.1 1469.7L2311.6 1485.2L2313.2 1501.3L2314.7 1518.0L2316.1 1535.2L2317.6 1552.8L2319.0 1570.6L2320.3 1588.7L2321.7 1607.0L2323.1 1625.2L2324.5 1643.4L2325.8 1661.5L2327.2 1679.4L2328.6 1697.0L2330.1 1714.2L2331.6 1730.9L2333.1 1747.0L2334.7 1762.5L2336.3 1777.3L2338.0 1791.2L2339.8 1804.2L2341.6 1816.3L2343.6 1827.2L2345.6 1837.1L2347.7 1845.6L2350.0 1852.9L2352.4 1858.8L2355.0 1863.4L2358.1 1866.4L2362.0 1867.7L2362.0 1863.5L2360.4 1863.0L2358.2 1861.0L2355.9 1857.1L2353.5 1851.6L2351.3 1844.6L2349.1 1836.3L2347.0 1826.6L2344.9 1815.7L2343.0 1803.8L2341.2 1790.8L2339.4 1776.9L2337.6 1762.2L2336.0 1746.7L2334.3 1730.6L2332.8 1713.9L2331.2 1696.8L2329.7 1679.2L2328.2 1661.3L2326.8 1643.3L2325.3 1625.0L2323.9 1606.8L2322.4 1588.6L2321.0 1570.5L2319.5 1552.6L2318.0 1535.1L2316.5 1517.9L2314.9 1501.2L2313.3 1485.1L2311.6 1469.6L2309.9 1454.8L2308.1 1440.9L2306.3 1427.9L2304.4 1415.9L2302.4 1405.0L2300.3 1395.2L2298.1 1386.7L2295.8 1379.5L2293.3 1373.8L2290.8 1369.5L2288.0 1366.8L2285.0 1365.9Z" fill="#5a9fd4"/><path d="M2447.5 962.0L2453.8 960.6L2459.4 956.5L2464.4 950.2L2468.9 941.9L2473.0 932.1L2476.8 920.9L2480.4 908.8L2483.8 896.1L2487.1 883.0L2490.4 870.0L2493.8 857.3L2497.3 845.2L2501.1 834.2L2505.2 824.6L2509.6 816.6L2514.3 810.7L2519.3 807.2L2524.5 806.1L2524.5 801.9L2517.6 803.6L2511.7 808.1L2506.6 814.7L2502.2 823.2L2498.3 833.2L2494.6 844.4L2491.3 856.6L2488.1 869.4L2484.9 882.5L2481.8 895.6L2478.6 908.3L2475.2 920.4L2471.6 931.5L2467.7 941.3L2463.4 949.5L2458.6 955.7L2453.3 959.6L2447.5 961.0Z" fill="#5a9fd4"/><path d="M2447.5 962.0L2453.7 961.0L2459.3 958.1L2464.4 953.6L2468.9 947.7L2473.0 940.7L2476.8 932.7L2480.3 924.1L2483.7 915.0L2487.0 905.7L2490.4 896.5L2493.7 887.4L2497.3 878.9L2501.0 871.1L2505.1 864.3L2509.4 858.7L2514.1 854.6L2519.1 852.1L2524.5 851.4L2524.5 847.1L2517.8 848.4L2511.9 851.6L2506.8 856.4L2502.3 862.5L2498.3 869.7L2494.7 877.8L2491.3 886.5L2488.1 895.7L2485.0 905.0L2481.8 914.4L2478.6 923.4L2475.2 932.1L2471.6 940.0L2467.7 947.0L2463.4 952.8L2458.7 957.2L2453.4 960.0L2447.5 961.0Z" fill="#5a9fd4"/><path d="M2447.5 962.0L2453.7 961.5L2459.2 960.1L2464.2 957.9L2468.7 955.0L2472.9 951.4L2476.7 947.5L2480.2 943.2L2483.6 938.6L2486.9 934.0L2490.2 929.4L2493.6 924.9L2497.1 920.7L2500.7 916.9L2504.7 913.6L2509.0 910.9L2513.6 908.9L2518.8 907.7L2524.5 907.4L2524.5 903.1L2518.1 903.8L2512.4 905.4L2507.2 907.9L2502.7 911.1L2498.6 914.8L2494.9 918.9L2491.5 923.4L2488.2 928.0L2485.1 932.8L2481.9 937.5L2478.7 942.0L2475.4 946.4L2471.8 950.3L2467.9 953.9L2463.6 956.8L2458.8 959.0L2453.5 960.5L2447.5 961.0Z" fill="#5a9fd4"/><path d="M2447.5 962.0L2453.6 961.9L2459.1 961.7L2464.0 961.3L2468.4 960.9L2472.5 960.3L2476.2 959.6L2479.7 958.9L2483.0 958.1L2486.3 957.3L2489.5 956.5L2492.8 955.8L2496.3 955.1L2500.0 954.5L2503.9 953.9L2508.3 953.5L2513.1 953.2L2518.5 953.1L2524.5 953.1L2524.5 948.9L2518.4 949.1L2512.9 949.5L2507.9 950.0L2503.5 950.7L2499.4 951.5L2495.7 952.3L2492.2 953.3L2488.9 954.2L2485.7 955.2L2482.5 956.1L2479.3 957.1L2475.8 958.0L2472.2 958.8L2468.2 959.5L2463.8 960.1L2459.0 960.6L2453.6 960.9L2447.5 961.0Z" fill="#5a9fd4"/><path d="M2447.5 962.0L2453.5 962.3L2458.9 963.3L2463.7 964.7L2468.0 966.6L2471.9 968.8L2475.5 971.3L2478.9 974.1L2482.1 977.0L2485.3 979.9L2488.4 982.9L2491.7 985.9L2495.2 988.7L2498.9 991.4L2503.0 993.8L2507.5 995.8L2512.6 997.4L2518.2 998.4L2524.5 998.9L2524.5 994.6L2518.6 994.5L2513.4 993.7L2508.7 992.5L2504.4 990.8L2500.5 988.8L2496.8 986.5L2493.4 983.9L2490.0 981.2L2486.7 978.3L2483.5 975.4L2480.1 972.6L2476.5 970.0L2472.7 967.5L2468.6 965.3L2464.1 963.5L2459.1 962.1L2453.6 961.3L2447.5 961.0Z" fill="#5a9fd4"/><path d="M2447.5 962.0L2453.4 962.8L2458.7 965.1L2463.5 968.8L2467.8 973.5L2471.7 979.2L2475.3 985.7L2478.6 992.7L2481.8 1000.2L2485.0 1007.8L2488.1 1015.5L2491.3 1023.0L2494.7 1030.1L2498.4 1036.7L2502.4 1042.7L2506.9 1047.7L2512.0 1051.7L2517.9 1054.3L2524.5 1055.3L2524.5 1051.2L2519.0 1050.5L2513.9 1048.5L2509.3 1045.2L2505.0 1040.7L2501.0 1035.1L2497.2 1028.8L2493.7 1021.9L2490.3 1014.5L2487.0 1006.9L2483.7 999.4L2480.3 991.9L2476.8 984.9L2473.0 978.4L2468.9 972.6L2464.3 967.8L2459.3 964.2L2453.7 961.8L2447.5 961.0Z" fill="#5a9fd4"/><path d="M2447.5 962.0L2453.4 963.3L2458.6 967.0L2463.4 972.8L2467.7 980.5L2471.6 989.6L2475.2 1000.1L2478.6 1011.4L2481.8 1023.4L2484.9 1035.7L2488.1 1047.9L2491.3 1060.0L2494.6 1071.4L2498.3 1081.9L2502.2 1091.3L2506.7 1099.3L2511.7 1105.5L2517.6 1109.7L2524.5 1111.3L2524.5 1107.2L2519.2 1106.1L2514.3 1102.8L2509.5 1097.3L2505.1 1089.9L2501.1 1080.8L2497.3 1070.5L2493.8 1059.2L2490.4 1047.3L2487.1 1035.1L2483.8 1022.9L2480.4 1010.9L2476.8 999.5L2473.0 989.1L2468.9 979.8L2464.4 972.1L2459.4 966.1L2453.8 962.3L2447.5 961.0Z" fill="#5a9fd4"/><path d="M2501.0 1314.5L2507.3 1313.2L2513.0 1309.3L2518.0 1303.3L2522.6 1295.5L2526.7 1286.2L2530.5 1275.7L2534.1 1264.3L2537.5 1252.2L2540.8 1239.9L2544.2 1227.6L2547.6 1215.6L2551.1 1204.3L2554.9 1193.9L2559.0 1184.7L2563.4 1177.2L2568.2 1171.7L2573.2 1168.4L2578.5 1167.3L2578.5 1163.2L2571.6 1164.8L2565.6 1169.0L2560.6 1175.3L2556.1 1183.3L2552.1 1192.8L2548.5 1203.4L2545.1 1214.9L2541.8 1227.0L2538.7 1239.3L2535.5 1251.7L2532.3 1263.8L2528.9 1275.2L2525.3 1285.7L2521.3 1294.9L2517.0 1302.6L2512.2 1308.5L2506.9 1312.2L2501.0 1313.5Z" fill="#5a9fd4"/><path d="M2501.0 1314.5L2507.3 1313.7L2512.9 1311.3L2517.9 1307.6L2522.5 1302.7L2526.6 1296.9L2530.5 1290.3L2534.0 1283.2L2537.4 1275.7L2540.8 1268.1L2544.1 1260.4L2547.5 1253.0L2551.0 1245.9L2554.8 1239.5L2558.8 1234.0L2563.2 1229.4L2567.9 1226.0L2572.9 1224.0L2578.5 1223.3L2578.5 1219.2L2571.9 1220.2L2566.0 1222.8L2560.8 1226.8L2556.3 1231.9L2552.2 1237.9L2548.5 1244.6L2545.1 1251.9L2541.9 1259.5L2538.7 1267.2L2535.6 1274.9L2532.3 1282.4L2529.0 1289.6L2525.3 1296.1L2521.4 1301.9L2517.1 1306.7L2512.3 1310.3L2507.0 1312.7L2501.0 1313.5Z" fill="#5a9fd4"/><path d="M2501.0 1314.5L2507.2 1314.3L2512.7 1313.6L2517.7 1312.5L2522.2 1311.1L2526.3 1309.4L2530.1 1307.4L2533.7 1305.3L2537.1 1303.1L2540.4 1300.8L2543.7 1298.6L2547.0 1296.4L2550.5 1294.4L2554.2 1292.5L2558.1 1290.9L2562.5 1289.6L2567.2 1288.6L2572.6 1288.1L2578.5 1287.9L2578.5 1283.8L2572.2 1284.1L2566.6 1285.0L2561.5 1286.3L2557.0 1287.9L2552.9 1289.8L2549.1 1291.9L2545.6 1294.2L2542.3 1296.6L2539.1 1299.0L2535.9 1301.4L2532.7 1303.8L2529.3 1306.0L2525.6 1308.0L2521.7 1309.8L2517.3 1311.3L2512.5 1312.5L2507.1 1313.2L2501.0 1313.5Z" fill="#5a9fd4"/><path d="M2501.0 1314.5L2507.1 1314.8L2512.5 1315.8L2517.3 1317.3L2521.6 1319.2L2525.6 1321.5L2529.2 1324.1L2532.6 1326.9L2535.8 1329.9L2539.0 1332.9L2542.2 1336.0L2545.5 1339.1L2549.0 1342.0L2552.7 1344.7L2556.8 1347.1L2561.4 1349.2L2566.5 1350.8L2572.2 1351.9L2578.5 1352.3L2578.5 1348.2L2572.6 1348.0L2567.3 1347.2L2562.6 1345.9L2558.3 1344.2L2554.3 1342.1L2550.6 1339.7L2547.2 1337.1L2543.8 1334.2L2540.5 1331.3L2537.2 1328.4L2533.8 1325.5L2530.2 1322.7L2526.4 1320.2L2522.3 1318.0L2517.7 1316.1L2512.7 1314.7L2507.2 1313.8L2501.0 1313.5Z" fill="#5a9fd4"/><path d="M2501.0 1314.5L2507.0 1315.3L2512.3 1317.7L2517.1 1321.3L2521.4 1326.1L2525.3 1331.8L2529.0 1338.3L2532.3 1345.4L2535.6 1352.9L2538.7 1360.6L2541.9 1368.3L2545.1 1375.8L2548.6 1383.0L2552.2 1389.7L2556.3 1395.6L2560.8 1400.7L2566.0 1404.7L2571.9 1407.3L2578.5 1408.3L2578.5 1404.2L2572.9 1403.5L2567.9 1401.5L2563.2 1398.1L2558.8 1393.6L2554.8 1388.0L2551.0 1381.7L2547.5 1374.7L2544.1 1367.3L2540.8 1359.7L2537.4 1352.1L2534.0 1344.6L2530.5 1337.5L2526.6 1331.0L2522.5 1325.2L2517.9 1320.4L2512.9 1316.7L2507.3 1314.3L2501.0 1313.5Z" fill="#5a9fd4"/><path d="M2501.0 1314.5L2506.9 1315.8L2512.2 1319.5L2517.0 1325.3L2521.3 1333.0L2525.3 1342.2L2528.9 1352.7L2532.3 1364.1L2535.5 1376.1L2538.7 1388.4L2541.8 1400.7L2545.1 1412.8L2548.5 1424.3L2552.1 1434.8L2556.1 1444.3L2560.6 1452.2L2565.6 1458.5L2571.6 1462.7L2578.5 1464.3L2578.5 1460.2L2573.2 1459.1L2568.2 1455.8L2563.4 1450.3L2559.0 1442.8L2554.9 1433.7L2551.1 1423.4L2547.6 1412.1L2544.2 1400.1L2540.8 1387.8L2537.5 1375.6L2534.1 1363.6L2530.5 1352.2L2526.7 1341.7L2522.6 1332.4L2518.0 1324.6L2513.0 1318.7L2507.3 1314.8L2501.0 1313.5Z" fill="#5a9fd4"/><path d="M2446.2 1638.1L2452.5 1637.0L2458.1 1634.0L2463.2 1629.2L2467.8 1622.9L2471.9 1615.5L2475.7 1607.0L2479.3 1597.9L2482.7 1588.2L2486.1 1578.3L2489.4 1568.5L2492.8 1558.9L2496.4 1549.8L2500.1 1541.5L2504.2 1534.3L2508.6 1528.4L2513.3 1524.0L2518.3 1521.3L2523.8 1520.5L2523.8 1516.3L2517.0 1517.6L2511.1 1521.0L2505.9 1526.1L2501.4 1532.6L2497.4 1540.2L2493.8 1548.8L2490.3 1558.0L2487.1 1567.7L2483.9 1577.7L2480.8 1587.6L2477.6 1597.2L2474.2 1606.4L2470.5 1614.8L2466.6 1622.2L2462.2 1628.4L2457.5 1633.1L2452.1 1636.0L2446.2 1637.1Z" fill="#5a9fd4"/><path d="M2446.2 1638.1L2452.4 1637.6L2458.0 1636.0L2463.1 1633.5L2467.6 1630.2L2471.8 1626.2L2475.6 1621.8L2479.2 1616.9L2482.6 1611.9L2485.9 1606.7L2489.3 1601.5L2492.7 1596.5L2496.2 1591.8L2499.9 1587.5L2503.9 1583.8L2508.2 1580.7L2512.9 1578.5L2518.0 1577.1L2523.8 1576.7L2523.8 1572.5L2517.3 1573.2L2511.5 1575.0L2506.4 1577.8L2501.8 1581.3L2497.7 1585.5L2493.9 1590.1L2490.5 1595.0L2487.2 1600.2L2484.1 1605.5L2480.9 1610.8L2477.7 1615.9L2474.3 1620.8L2470.7 1625.2L2466.7 1629.1L2462.4 1632.4L2457.6 1634.9L2452.2 1636.5L2446.2 1637.1Z" fill="#5a9fd4"/><path d="M2446.2 1638.1L2452.3 1638.0L2457.9 1637.6L2462.8 1636.9L2467.3 1636.1L2471.4 1635.1L2475.2 1633.9L2478.8 1632.7L2482.2 1631.3L2485.4 1630.0L2488.7 1628.6L2492.1 1627.4L2495.5 1626.1L2499.2 1625.1L2503.2 1624.1L2507.6 1623.3L2512.4 1622.8L2517.8 1622.5L2523.8 1622.4L2523.8 1618.2L2517.6 1618.5L2512.0 1619.1L2507.0 1619.9L2502.5 1620.9L2498.4 1622.2L2494.6 1623.5L2491.1 1624.9L2487.8 1626.4L2484.6 1628.0L2481.3 1629.5L2478.1 1630.9L2474.7 1632.3L2471.0 1633.6L2467.0 1634.7L2462.6 1635.7L2457.7 1636.4L2452.3 1636.9L2446.2 1637.1Z" fill="#5a9fd4"/><path d="M2446.2 1638.1L2452.3 1638.4L2457.7 1639.1L2462.6 1640.3L2466.9 1641.8L2470.9 1643.6L2474.5 1645.6L2477.9 1647.9L2481.2 1650.2L2484.3 1652.6L2487.6 1655.0L2490.9 1657.4L2494.4 1659.7L2498.1 1661.8L2502.2 1663.8L2506.8 1665.4L2511.9 1666.7L2517.5 1667.5L2523.8 1667.9L2523.8 1663.7L2517.8 1663.6L2512.5 1663.0L2507.7 1662.0L2503.4 1660.7L2499.4 1659.1L2495.8 1657.3L2492.3 1655.2L2488.9 1653.1L2485.7 1650.8L2482.3 1648.5L2478.9 1646.3L2475.4 1644.2L2471.6 1642.2L2467.4 1640.5L2462.9 1639.1L2457.9 1638.0L2452.4 1637.3L2446.2 1637.1Z" fill="#5a9fd4"/><path d="M2446.2 1638.1L2452.2 1638.8L2457.6 1640.6L2462.4 1643.6L2466.7 1647.4L2470.6 1652.0L2474.2 1657.2L2477.6 1662.9L2480.9 1668.8L2484.0 1675.0L2487.2 1681.2L2490.4 1687.2L2493.9 1693.0L2497.6 1698.4L2501.7 1703.2L2506.2 1707.3L2511.4 1710.5L2517.2 1712.6L2523.8 1713.4L2523.8 1709.2L2518.1 1708.8L2513.0 1707.1L2508.3 1704.5L2504.0 1700.9L2500.0 1696.5L2496.2 1691.5L2492.7 1685.9L2489.3 1680.0L2486.0 1674.0L2482.6 1667.9L2479.2 1661.9L2475.6 1656.3L2471.8 1651.0L2467.7 1646.4L2463.1 1642.6L2458.0 1639.6L2452.4 1637.7L2446.2 1637.1Z" fill="#5a9fd4"/><path d="M2446.2 1638.1L2452.1 1639.2L2457.5 1642.2L2462.2 1646.9L2466.6 1653.0L2470.5 1660.5L2474.2 1668.9L2477.6 1678.0L2480.8 1687.7L2483.9 1697.6L2487.1 1707.6L2490.3 1717.3L2493.8 1726.6L2497.4 1735.1L2501.4 1742.8L2505.9 1749.3L2511.1 1754.4L2517.0 1757.8L2523.8 1759.1L2523.8 1754.9L2518.4 1754.1L2513.3 1751.4L2508.6 1747.0L2504.2 1741.1L2500.1 1733.8L2496.4 1725.5L2492.8 1716.4L2489.4 1706.8L2486.1 1697.0L2482.7 1687.1L2479.3 1677.4L2475.7 1668.2L2471.9 1659.8L2467.8 1652.3L2463.2 1646.0L2458.1 1641.2L2452.5 1638.2L2446.2 1637.1Z" fill="#5a9fd4"/><path d="M2448.5 1866.1L2454.8 1865.6L2460.4 1864.0L2465.4 1861.5L2470.0 1858.2L2474.2 1854.3L2478.1 1849.8L2481.7 1845.0L2485.1 1840.0L2488.4 1834.8L2491.8 1829.6L2495.2 1824.6L2498.7 1819.9L2502.5 1815.7L2506.5 1812.0L2510.8 1808.9L2515.5 1806.7L2520.7 1805.3L2526.5 1804.9L2526.5 1800.7L2520.0 1801.4L2514.2 1803.2L2509.0 1806.0L2504.4 1809.5L2500.2 1813.6L2496.5 1818.2L2493.0 1823.2L2489.7 1828.3L2486.6 1833.6L2483.4 1838.9L2480.1 1844.0L2476.7 1848.8L2473.1 1853.2L2469.1 1857.1L2464.8 1860.4L2460.0 1862.9L2454.6 1864.5L2448.5 1865.1Z" fill="#5a9fd4"/><path d="M2448.5 1866.1L2454.7 1865.9L2460.3 1865.2L2465.3 1864.2L2469.8 1862.7L2474.0 1861.1L2477.8 1859.1L2481.4 1857.1L2484.8 1854.9L2488.1 1852.6L2491.4 1850.4L2494.8 1848.3L2498.3 1846.3L2502.0 1844.5L2506.0 1842.9L2510.3 1841.6L2515.2 1840.6L2520.5 1840.1L2526.5 1839.9L2526.5 1835.8L2520.2 1836.1L2514.5 1837.0L2509.4 1838.2L2504.8 1839.8L2500.7 1841.7L2496.9 1843.8L2493.4 1846.1L2490.1 1848.4L2486.9 1850.8L2483.7 1853.2L2480.4 1855.5L2477.0 1857.7L2473.3 1859.7L2469.3 1861.4L2464.9 1862.9L2460.1 1864.1L2454.6 1864.8L2448.5 1865.1Z" fill="#5a9fd4"/><path d="M2448.5 1866.1L2454.6 1866.3L2460.1 1866.8L2465.0 1867.5L2469.4 1868.5L2473.4 1869.7L2477.1 1871.0L2480.5 1872.4L2483.8 1873.9L2487.0 1875.5L2490.3 1877.0L2493.6 1878.6L2497.1 1880.0L2500.9 1881.4L2505.0 1882.6L2509.6 1883.7L2514.6 1884.5L2520.2 1885.1L2526.5 1885.4L2526.5 1881.2L2520.5 1881.2L2515.0 1880.8L2510.2 1880.3L2505.8 1879.5L2501.8 1878.5L2498.1 1877.4L2494.6 1876.1L2491.3 1874.8L2488.0 1873.4L2484.6 1872.1L2481.2 1870.7L2477.7 1869.4L2473.9 1868.2L2469.7 1867.2L2465.2 1866.3L2460.2 1865.6L2454.7 1865.2L2448.5 1865.1Z" fill="#5a9fd4"/><path d="M2448.5 1866.1L2454.6 1866.7L2459.9 1868.3L2464.8 1870.8L2469.1 1874.1L2473.1 1878.0L2476.7 1882.5L2480.1 1887.4L2483.4 1892.5L2486.6 1897.8L2489.7 1903.1L2493.0 1908.3L2496.5 1913.3L2500.2 1917.9L2504.4 1922.1L2509.0 1925.6L2514.1 1928.4L2520.0 1930.2L2526.5 1930.9L2526.5 1926.7L2520.7 1926.3L2515.5 1924.9L2510.8 1922.6L2506.5 1919.6L2502.5 1915.9L2498.7 1911.6L2495.2 1906.8L2491.8 1901.8L2488.4 1896.6L2485.1 1891.4L2481.7 1886.3L2478.1 1881.5L2474.2 1877.0L2470.0 1873.0L2465.4 1869.7L2460.4 1867.2L2454.8 1865.6L2448.5 1865.1Z" fill="#5a9fd4"/><path d="M967.0 786.5L961.5 785.0L956.4 780.7L951.8 773.9L947.7 764.9L943.9 754.0L940.3 741.7L937.1 728.1L934.0 713.7L931.0 698.8L928.0 683.7L925.0 668.7L921.9 654.3L918.6 640.7L915.1 628.2L911.3 617.1L907.0 607.8L902.2 600.6L896.5 595.7L889.8 593.8L889.8 598.0L894.6 599.2L899.4 603.0L904.0 609.5L908.2 618.4L912.2 629.1L915.9 641.4L919.3 654.9L922.6 669.3L925.7 684.1L928.9 699.2L932.1 714.1L935.3 728.5L938.8 742.1L942.4 754.5L946.4 765.4L950.8 774.5L955.6 781.5L961.0 785.9L967.0 787.5Z" fill="#5a9fd4"/><path d="M967.0 786.5L961.1 785.4L955.8 782.5L951.0 777.8L946.7 771.7L942.8 764.4L939.2 756.0L935.8 747.0L932.6 737.4L929.5 727.6L926.3 717.7L923.1 708.1L919.7 698.9L916.0 690.4L912.0 682.9L907.6 676.4L902.5 671.4L896.6 668.0L889.8 666.7L889.8 670.9L895.2 671.7L900.2 674.3L904.9 678.7L909.3 684.6L913.3 691.8L917.1 700.0L920.6 709.0L924.0 718.5L927.3 728.2L930.7 738.0L934.1 747.6L937.6 756.7L941.4 765.0L945.5 772.4L950.1 778.7L955.1 783.4L960.7 786.4L967.0 787.5Z" fill="#5a9fd4"/><path d="M967.0 786.5L961.0 786.1L955.6 784.9L950.8 783.1L946.5 780.7L942.6 777.8L939.0 774.6L935.6 771.1L932.4 767.4L929.2 763.6L926.1 759.7L922.8 756.0L919.4 752.3L915.6 749.0L911.5 745.9L907.0 743.4L901.9 741.4L896.2 740.0L889.8 739.5L889.8 743.7L895.6 744.0L900.8 744.9L905.5 746.5L909.8 748.7L913.7 751.4L917.4 754.4L920.9 757.7L924.3 761.3L927.6 765.0L930.9 768.7L934.3 772.4L937.8 775.8L941.6 779.0L945.8 781.9L950.3 784.2L955.3 786.0L960.8 787.1L967.0 787.5Z" fill="#5a9fd4"/><path d="M967.0 786.5L960.9 786.6L955.4 787.1L950.4 787.8L946.0 788.7L941.9 789.8L938.1 791.1L934.6 792.5L931.2 793.9L927.9 795.4L924.7 796.9L921.3 798.3L917.9 799.7L914.2 800.9L910.3 801.9L905.9 802.7L901.1 803.4L895.8 803.7L889.8 803.8L889.8 808.0L896.0 807.7L901.6 807.0L906.6 806.2L911.1 805.0L915.2 803.7L918.9 802.3L922.4 800.7L925.7 799.1L928.9 797.4L932.1 795.8L935.3 794.2L938.7 792.7L942.4 791.3L946.3 790.1L950.7 789.0L955.5 788.2L960.9 787.7L967.0 787.5Z" fill="#5a9fd4"/><path d="M967.0 786.5L960.8 787.2L955.2 789.1L950.2 792.1L945.6 796.0L941.5 800.7L937.7 806.0L934.1 811.8L930.7 817.8L927.4 824.0L924.1 830.2L920.7 836.2L917.2 841.9L913.5 847.0L909.5 851.5L905.2 855.1L900.5 857.8L895.4 859.5L889.8 860.0L889.8 864.2L896.3 863.4L902.1 861.2L907.3 857.9L911.8 853.8L915.9 848.9L919.6 843.4L923.0 837.5L926.2 831.3L929.4 825.1L932.5 818.8L935.7 812.7L939.1 806.9L942.7 801.6L946.6 797.0L950.9 793.1L955.7 790.1L961.0 788.2L967.0 787.5Z" fill="#5a9fd4"/><path d="M967.0 786.5L960.7 787.7L955.1 791.1L950.1 796.3L945.5 803.2L941.4 811.5L937.6 820.7L934.1 830.8L930.7 841.5L927.3 852.3L924.0 863.2L920.6 873.8L917.1 883.8L913.3 892.9L909.2 900.9L904.9 907.5L900.2 912.4L895.2 915.3L889.8 916.2L889.8 920.4L896.6 919.0L902.5 915.2L907.6 909.6L912.1 902.5L916.1 894.1L919.7 884.7L923.1 874.6L926.3 863.9L929.5 853.0L932.6 842.0L935.8 831.4L939.2 821.3L942.8 812.1L946.7 803.9L951.1 797.1L955.8 791.9L961.1 788.7L967.0 787.5Z" fill="#5a9fd4"/><path d="M967.0 786.5L960.7 788.1L955.0 792.7L950.0 799.8L945.5 809.1L941.4 820.1L937.6 832.7L934.0 846.3L930.6 860.6L927.3 875.3L924.0 889.9L920.6 904.2L917.0 917.7L913.2 930.1L909.2 941.0L904.7 950.0L900.0 956.7L895.0 960.7L889.8 961.9L889.8 966.1L896.8 964.2L902.7 959.2L907.8 951.7L912.2 942.3L916.1 931.1L919.8 918.5L923.1 904.8L926.3 890.5L929.5 875.7L932.6 861.0L935.8 846.7L939.2 833.1L942.8 820.6L946.8 809.6L951.1 800.4L955.9 793.5L961.2 789.0L967.0 787.5Z" fill="#5a9fd4"/><path d="M967.0 786.5L961.2 788.1L956.1 792.6L951.4 799.6L947.2 808.8L943.4 819.9L939.8 832.6L936.5 846.5L933.3 861.4L930.3 877.0L927.3 892.8L924.3 908.6L921.3 924.1L918.1 939.0L914.8 952.8L911.2 965.4L907.4 976.3L903.3 985.3L898.9 991.9L894.3 995.7L889.8 996.9L889.8 1001.1L896.3 999.2L901.7 994.3L906.4 987.0L910.5 977.6L914.2 966.3L917.6 953.6L920.8 939.6L923.8 924.6L926.7 909.1L929.5 893.2L932.3 877.3L935.2 861.8L938.2 846.9L941.4 833.0L944.8 820.3L948.5 809.3L952.5 800.2L956.9 793.3L961.8 789.0L967.0 787.5Z" fill="#5a9fd4"/><path d="M967.0 381.1L961.0 381.1L955.6 381.0L950.7 381.0L946.3 380.9L942.3 380.8L938.7 380.8L935.2 380.7L932.0 380.6L928.8 380.5L925.5 380.4L922.3 380.3L918.8 380.2L915.2 380.1L911.2 380.0L906.8 379.9L901.9 379.7L896.5 379.6L890.5 379.5L890.5 383.7L896.5 383.6L901.9 383.5L906.8 383.3L911.2 383.2L915.2 383.1L918.8 383.0L922.3 382.9L925.5 382.8L928.8 382.7L932.0 382.6L935.2 382.5L938.7 382.4L942.3 382.4L946.3 382.3L950.7 382.2L955.6 382.2L961.0 382.1L967.0 382.1Z" fill="#5a9fd4"/><path d="M1131.8 1538.1L1128.1 1537.0L1124.5 1533.7L1121.1 1528.3L1118.0 1520.9L1115.0 1511.9L1112.2 1501.2L1109.6 1489.2L1107.1 1476.0L1104.8 1461.7L1102.6 1446.6L1100.4 1430.8L1098.3 1414.5L1096.3 1397.8L1094.3 1380.9L1092.3 1364.1L1090.3 1347.4L1088.2 1331.0L1086.1 1315.2L1083.8 1300.0L1081.5 1285.7L1079.1 1272.4L1076.5 1260.3L1073.7 1249.6L1070.7 1240.3L1067.4 1232.7L1063.8 1226.9L1059.6 1222.9L1054.6 1221.4L1054.6 1225.6L1057.5 1226.4L1060.8 1229.3L1064.1 1234.4L1067.3 1241.6L1070.4 1250.5L1073.3 1261.1L1076.0 1273.0L1078.6 1286.2L1081.0 1300.5L1083.4 1315.6L1085.6 1331.4L1087.8 1347.7L1090.0 1364.3L1092.1 1381.2L1094.2 1398.0L1096.4 1414.7L1098.6 1431.0L1100.8 1446.9L1103.2 1462.0L1105.6 1476.3L1108.2 1489.5L1110.9 1501.6L1113.8 1512.2L1116.8 1521.4L1120.1 1528.8L1123.7 1534.3L1127.5 1537.9L1131.8 1539.1Z" fill="#5a9fd4"/><path d="M1131.8 1538.1L1125.8 1537.6L1120.5 1536.1L1115.7 1533.8L1111.4 1530.8L1107.5 1527.2L1103.9 1523.1L1100.5 1518.7L1097.3 1514.0L1094.1 1509.2L1091.0 1504.3L1087.7 1499.6L1084.3 1495.0L1080.6 1490.8L1076.5 1487.0L1071.9 1483.8L1066.8 1481.2L1061.0 1479.6L1054.6 1478.9L1054.6 1483.1L1060.3 1483.5L1065.5 1484.7L1070.2 1486.8L1074.5 1489.5L1078.4 1492.9L1082.1 1496.8L1085.6 1501.1L1089.0 1505.7L1092.3 1510.4L1095.6 1515.2L1099.0 1519.8L1102.6 1524.2L1106.4 1528.3L1110.5 1531.9L1115.0 1534.9L1120.1 1537.2L1125.6 1538.6L1131.8 1539.1Z" fill="#5a9fd4"/><path d="M1131.8 1538.1L1125.5 1539.7L1119.8 1544.4L1114.8 1551.6L1110.3 1561.0L1106.2 1572.2L1102.4 1584.9L1098.8 1598.7L1095.4 1613.2L1092.1 1628.1L1088.8 1642.9L1085.4 1657.4L1081.8 1671.1L1078.0 1683.7L1074.0 1694.7L1069.5 1703.9L1064.7 1710.6L1059.7 1714.7L1054.6 1715.9L1054.6 1720.1L1061.6 1718.1L1067.5 1713.1L1072.6 1705.6L1077.0 1696.0L1080.9 1684.6L1084.6 1671.9L1087.9 1658.0L1091.1 1643.4L1094.3 1628.5L1097.4 1613.6L1100.6 1599.1L1104.0 1585.3L1107.6 1572.7L1111.6 1561.5L1115.9 1552.2L1120.7 1545.1L1126.0 1540.7L1131.8 1539.1Z" fill="#5a9fd4"/><path d="M1131.8 1538.1L1128.5 1539.1L1125.4 1542.0L1122.6 1546.7L1120.0 1552.9L1117.5 1560.6L1115.1 1569.8L1112.9 1580.3L1110.7 1591.9L1108.7 1604.7L1106.7 1618.5L1104.8 1633.2L1103.0 1648.7L1101.2 1664.8L1099.5 1681.6L1097.8 1698.8L1096.1 1716.3L1094.5 1734.2L1092.9 1752.2L1091.3 1770.2L1089.7 1788.2L1088.0 1806.1L1086.4 1823.6L1084.7 1840.8L1083.0 1857.5L1081.2 1873.7L1079.4 1889.1L1077.4 1903.8L1075.5 1917.5L1073.4 1930.3L1071.2 1941.9L1069.0 1952.3L1066.6 1961.3L1064.1 1968.9L1061.5 1974.8L1059.0 1979.0L1056.5 1981.3L1054.6 1981.9L1054.6 1986.1L1058.7 1984.8L1062.1 1981.4L1065.0 1976.5L1067.6 1970.1L1070.1 1962.3L1072.4 1953.1L1074.5 1942.5L1076.6 1930.8L1078.6 1918.0L1080.5 1904.2L1082.3 1889.5L1084.0 1874.0L1085.7 1857.8L1087.3 1841.1L1088.9 1823.9L1090.5 1806.3L1092.0 1788.4L1093.5 1770.4L1095.1 1752.4L1096.6 1734.4L1098.1 1716.5L1099.7 1698.9L1101.3 1681.7L1102.9 1665.0L1104.6 1648.9L1106.4 1633.4L1108.2 1618.7L1110.1 1604.9L1112.1 1592.2L1114.2 1580.5L1116.3 1570.1L1118.6 1561.0L1121.1 1553.3L1123.6 1547.2L1126.3 1542.7L1129.0 1540.0L1131.8 1539.1Z" fill="#5a9fd4"/></svg>
<div class="abs" style="left:1625px;top:1091px;width:292.8px;height:82.8px;border-radius:999px;background:#1b4f8a;border:2.4px solid #8b5cf6;color:#fff;font-weight:bold;font-size:27.6px;line-height:32px;text-align:center;display:flex;align-items:center;justify-content:center;white-space:nowrap;padding-top:6px"><div>ECG<br>Interpretation</div></div>
<div class="cc" style="left:1920.4px;top:1125.0px"></div>
<div class="top" style="left:967px;top:353px;width:290.5px;height:57.5px;background:#d97706;border:1.5px solid #4a6f9a"><div>Key Intervals and Normal<br>Values</div></div>
<div class="cc" style="left:948.9px;top:374.2px"></div>
<div class="top" style="left:967px;top:758.5px;width:290.5px;height:58px;background:#c8373b;border:2px solid #f26d6d"><div>Common ECG Patterns<br>(High-Yield)</div></div>
<div class="cc" style="left:948.9px;top:779.6px"></div>
<div class="sub" style="left:1131.8px;top:1523.2px;width:126px;height:31px;background:#1d5fa6;border-color:#2a6cb3;color:#fff;font-size:15.6px">Flashcards</div>
<div class="cc" style="left:1114.2px;top:1531.2px"></div>
<div class="nd pill" style="left:1994px;top:323px;width:291.3px;height:130.5px;padding-left:42.5px;"><div>The electrocardiogram (ECG/EKG) is<br>the most widely used cardiac<br>diagnostic tool. A systematic<br>approach to ECG interpretation is<br>critical for identifying arrhythmias,<br>ischemia, and structural<br>abnormalities.</div></div>
<div class="nd pill" style="left:1994px;top:461px;width:229.3px;height:28px;padding-left:35px;"><div><svg width="15" height="15" viewBox="0 0 16 16" style="vertical-align:-3px;margin-right:1px"><path d="M1 .5h10l4 4v11H1z" fill="#e9eef5"/><path d="M11 .5v4h4z" fill="#b9c3d0"/><path d="M1 15.5V11l5-4 4 4 5-3v7.500z" fill="#4caf50"/><path d="M1 15.500 15 6v9.500z" fill="#43a047"/></svg>Normal sinus rhythm ECG</div></div>
<svg class="abs" style="left:1994px;top:598px" width="291" height="83"><polygon points="0,41.500 41,0 249.500,0 291,41.500 249.500,83 41,83" fill="#1b6ec2"/></svg>
<div class="top" style="left:1994px;top:598px;width:291px;height:83px;padding-left:72px;line-height:20.3px;padding-top:1px"><div>Systematic<br>Approach to ECG<br>Reading</div></div>
<div class="cc" style="left:2287.9px;top:631.6px"></div>
<div class="top" style="left:1994px;top:1337.6px;width:290.6px;height:57.5px;background:#2e9c4f;border:1.5px solid #3a6ea5;padding-left:42.500px"><div>ECG Waves and Their<br>Significance</div></div>
<div class="cc" style="left:2287.9px;top:1359.0px"></div>
<div class="nd pill" style="left:2361.5px;top:496px;width:244.3px;height:28px;padding-left:37.5px;"><div>1. <b>Rate</b> — normal 60-100 bpm</div></div>
<div class="nd pill" style="left:2361.5px;top:531px;width:291.3px;height:48.5px;padding-left:42.5px;"><div>2. <b>Rhythm</b> — regular or irregular?<br>Sinus rhythm?</div></div>
<div class="nd pill" style="left:2361.5px;top:587px;width:291.3px;height:48.5px;padding-left:42.5px;"><div>3. <b>Axis</b> — normal, left axis deviation,<br>right axis deviation</div></div>
<div class="nd pill" style="left:2361.5px;top:643px;width:216.8px;height:28px;padding-left:34px;"><div>4. <b>Intervals</b> — PR, QRS, QT</div></div>
<div class="nd pill" style="left:2361.5px;top:678px;width:291.3px;height:48.5px;padding-left:42.5px;"><div>5. <b>Segments</b> — ST segment<br>(elevation or depression)</div></div>
<div class="nd pill" style="left:2361.5px;top:734px;width:291.3px;height:48.5px;padding-left:42.5px;"><div>6. <b>Waves</b> — P wave, QRS<br>morphology, T wave, U wave</div></div>
<div class="sub" style="left:2361.5px;top:947.5px;width:86px;height:28px;">P Wave</div>
<div class="cc" style="left:2450.9px;top:954.1px"></div>
<div class="sub" style="left:2361.5px;top:1300px;width:139.5px;height:28px;">QRS Complex</div>
<div class="cc" style="left:2503.9px;top:1306.6px"></div>
<div class="sub" style="left:2361.5px;top:1623.7px;width:84.7px;height:28px;">T Wave</div>
<div class="cc" style="left:2449.4px;top:1630.2px"></div>
<div class="sub" style="left:2361.5px;top:1851.6px;width:87px;height:28px;">U Wave</div>
<div class="cc" style="left:2452.1px;top:1858.2px"></div>
<div class="nd pill" style="left:2524px;top:790px;width:268.8px;height:28px;padding-left:41px;"><div>• Represents <b>atrial depolarization</b></div></div>
<div class="nd pill" style="left:2524px;top:825px;width:291.3px;height:48.5px;padding-left:42.5px;"><div>• Normal duration: &lt; 0.12 seconds<br>(&lt; 3 small boxes)</div></div>
<div class="nd pill" style="left:2524px;top:881px;width:291.3px;height:48.5px;padding-left:42.5px;"><div>• Normal amplitude: &lt; 2.5 mm in<br>lead II</div></div>
<div class="nd pill" style="left:2524px;top:937px;width:231.8px;height:28px;padding-left:36px;"><div>• Best seen in leads II and V1</div></div>
<div class="nd pill" style="left:2524px;top:972.5px;width:291.3px;height:48.5px;padding-left:42.5px;"><div>• <b>Absent P waves</b>: atrial fibrillation,<br>junctional rhythm</div></div>
<div class="nd pill" style="left:2524px;top:1029px;width:291.3px;height:48.5px;padding-left:42.5px;"><div>• <b>P mitrale</b> (wide, notched in lead II):<br>left atrial enlargement</div></div>
<div class="nd pill" style="left:2524px;top:1085px;width:291.3px;height:48.5px;padding-left:42.5px;"><div>• <b>P pulmonale</b> (tall, peaked in lead<br>II): right atrial enlargement</div></div>
<div class="nd pill" style="left:2578px;top:1141px;width:291.3px;height:48.5px;padding-left:42.5px;"><div>• Represents <b>ventricular</b><br><b>depolarization</b></div></div>
<div class="nd pill" style="left:2578px;top:1197px;width:291.3px;height:48.5px;padding-left:42.5px;"><div>• Normal duration: 0.06–0.10<br>seconds (1.5–2.5 small boxes)</div></div>
<div class="nd pill" style="left:2578px;top:1253.5px;width:291.3px;height:64.7px;padding-left:42.5px;"><div>• <b>Wide QRS (&gt; 0.12 s)</b>: bundle<br>branch block, ventricular rhythm,<br>hyperkalemia</div></div>
<div class="nd pill" style="left:2578px;top:1326px;width:291.3px;height:48.5px;padding-left:42.5px;"><div>• <b>LBBB pattern</b>: W in V1, M in V5-V6<br>("WiLLiaM")</div></div>
<div class="nd pill" style="left:2578px;top:1382px;width:291.3px;height:48.5px;padding-left:42.5px;"><div>• <b>RBBB pattern</b>: M in V1, W in V5-V6<br>("MaRRoW")</div></div>
<div class="nd pill" style="left:2578px;top:1438px;width:291.3px;height:48.5px;padding-left:42.5px;"><div>• Q waves may indicate prior<br>myocardial infarction</div></div>
<div class="nd pill" style="left:2523.3px;top:1494px;width:291.8px;height:48.8px;padding-left:42.5px;"><div>• Represents <b>ventricular</b><br><b>repolarization</b></div></div>
<div class="nd pill" style="left:2523.3px;top:1550.2px;width:291.8px;height:48.8px;padding-left:42.5px;"><div>• Normally upright in leads I, II, V3-<br>V6</div></div>
<div class="nd pill" style="left:2523.3px;top:1606.5px;width:215.10000000000002px;height:27.7px;padding-left:33.5px;"><div>• Normally inverted in aVR</div></div>
<div class="nd pill" style="left:2523.3px;top:1641.5px;width:291.8px;height:48.6px;padding-left:42.5px;"><div>• <b>Peaked T waves</b>: hyperkalemia<br>(earliest sign)</div></div>
<div class="nd pill" style="left:2523.3px;top:1697.5px;width:268.5px;height:27.7px;padding-left:40px;"><div>• <b>Flattened T waves</b>: hypokalemia</div></div>
<div class="nd pill" style="left:2523.3px;top:1732.6px;width:291.8px;height:48.8px;padding-left:42.5px;"><div>• <b>T wave inversions</b>: ischemia, strain<br>pattern, Wellens syndrome</div></div>
<div class="nd pill" style="left:2526px;top:1789px;width:243.60000000000002px;height:27.6px;padding-left:37px;"><div>• Small deflection after T wave</div></div>
<div class="nd pill" style="left:2526px;top:1824px;width:261.3px;height:27.7px;padding-left:39px;"><div>• Most prominent in leads V2-V3</div></div>
<div class="nd pill" style="left:2526px;top:1859px;width:291.6px;height:48.6px;padding-left:42.5px;"><div>• <b>Prominent U waves</b>: hypokalemia,<br>bradycardia</div></div>
<div class="nd pill" style="left:2526px;top:1915px;width:233.4px;height:27.6px;padding-left:36px;"><div>• Often clinically insignificant</div></div>
<div class="nd pill" style="left:599.5px;top:563px;width:291.59999999999997px;height:65.8px;padding-left:42.5px;"><div>• <b>ST elevation + reciprocal</b><br><b>depression</b> <span style="font-family:'DejaVu Sans',sans-serif;font-size:13.5px;line-height:0">→</span> STEMI (activate cath<br>lab)</div></div>
<div class="nd pill" style="left:599.5px;top:636px;width:291.59999999999997px;height:65.6px;padding-left:42.5px;"><div>• <b>ST depression + T wave inversion</b><br><span style="font-family:'DejaVu Sans',sans-serif;font-size:13.5px;line-height:0">→</span> NSTEMI or unstable angina</div></div>
<div class="nd pill" style="left:599.5px;top:708.8px;width:291.59999999999997px;height:65.6px;padding-left:42.5px;"><div>• <b>Peaked T waves <span style="font-family:'DejaVu Sans',sans-serif;font-size:13.5px;line-height:0">→</span> widened QRS</b><br><b><span style="font-family:'DejaVu Sans',sans-serif;font-size:13.5px;line-height:0">→</span> sine wave</b> <span style="font-family:'DejaVu Sans',sans-serif;font-size:13.5px;line-height:0">→</span> progressive<br>hyperkalemia</div></div>
<div class="nd pill" style="left:599.5px;top:781.2px;width:291.59999999999997px;height:49.3px;padding-left:42.5px;"><div>• <b>Delta wave + short PR</b> <span style="font-family:'DejaVu Sans',sans-serif;font-size:13.5px;line-height:0">→</span> Wolff-<br>Parkinson-White (WPW)</div></div>
<div class="nd pill" style="left:599.5px;top:837.5px;width:291.59999999999997px;height:49.2px;padding-left:42.5px;"><div>• <b>Sawtooth flutter waves</b> <span style="font-family:'DejaVu Sans',sans-serif;font-size:13.5px;line-height:0">→</span> atrial<br>flutter (~300 bpm atrial rate)</div></div>
<div class="nd pill" style="left:599.5px;top:893.7px;width:291.59999999999997px;height:49.2px;padding-left:42.5px;"><div>• <b>Irregularly irregular + absent P</b><br><b>waves</b> <span style="font-family:'DejaVu Sans',sans-serif;font-size:13.5px;line-height:0">→</span> atrial fibrillation</div></div>
<div class="nd pill" style="left:613.6px;top:950px;width:277.49999999999994px;height:28px;padding-left:42.5px;"><div>• <b>Osborn (J) waves</b> <span style="font-family:'DejaVu Sans',sans-serif;font-size:13.5px;line-height:0">→</span> hypothermia</div></div>
<div class="nd pill" style="left:819px;top:985px;width:72.09999999999995px;height:28px;padding-left:42.5px;"><div><span style="display:inline-block;width:39px;height:1.2px;background:#39506c;vertical-align:middle;margin-left:-26px"></span></div></div>
<div class="nd card" style="left:413.2px;top:207.2px;width:477.6px;height:349.2px;border-radius:5px"><table style="position:absolute;left:7.2px;top:17.5px;border-collapse:collapse;font-size:15.3px;line-height:19.9px;color:#d6e4f0;white-space:nowrap"><tr><td style="border:1px solid #1a3352;padding:3.95px 7.5px 3.95px 7.5px;vertical-align:top;width:138.5px"><b>Interval/Segment</b></td><td style="border:1px solid #1a3352;padding:3.95px 7.5px 3.95px 7.5px;vertical-align:top;width:123.5px"><b>Normal Range</b></td><td style="border:1px solid #1a3352;padding:3.95px 7.5px 3.95px 7.5px;vertical-align:top;width:197px"><b>Clinical Significance</b></td></tr><tr><td style="border:1px solid #1a3352;padding:3.95px 7.5px 3.95px 7.5px;vertical-align:top;width:138.5px"><b>PR interval</b></td><td style="border:1px solid #1a3352;padding:3.95px 7.5px 3.95px 7.5px;vertical-align:top;width:123.5px">0.12–0.20 sec</td><td style="border:1px solid #1a3352;padding:3.95px 7.5px 3.95px 7.5px;vertical-align:top;width:197px">Prolonged: first-degree<br>AV block; Short: pre-<br>excitation (WPW)</td></tr><tr><td style="border:1px solid #1a3352;padding:3.95px 7.5px 3.95px 7.5px;vertical-align:top;width:138.5px"><b>QRS duration</b></td><td style="border:1px solid #1a3352;padding:3.95px 7.5px 3.95px 7.5px;vertical-align:top;width:123.5px">0.06–0.10 sec</td><td style="border:1px solid #1a3352;padding:3.95px 7.5px 3.95px 7.5px;vertical-align:top;width:197px">Prolonged (&gt;0.12): BBB,<br>ventricular rhythm</td></tr><tr><td style="border:1px solid #1a3352;padding:3.95px 7.5px 3.95px 7.5px;vertical-align:top;width:138.5px"><b>QT interval</b></td><td style="border:1px solid #1a3352;padding:3.95px 7.5px 3.95px 7.5px;vertical-align:top;width:123.5px">&lt; 0.44 sec<br>(corrected)</td><td style="border:1px solid #1a3352;padding:3.95px 7.5px 3.95px 7.5px;vertical-align:top;width:197px">Prolonged: risk of<br>Torsades de Pointes</td></tr><tr><td style="border:1px solid #1a3352;padding:3.95px 7.5px 3.95px 7.5px;vertical-align:top;width:138.5px"><b>ST segment</b></td><td style="border:1px solid #1a3352;padding:3.95px 7.5px 3.95px 7.5px;vertical-align:top;width:123.5px">Isoelectric (flat)</td><td style="border:1px solid #1a3352;padding:3.95px 7.5px 3.95px 7.5px;vertical-align:top;width:197px">Elevation: STEMI;<br>Depression: ischemia,<br>reciprocal changes</td></tr><tr><td style="border:1px solid #1a3352;padding:3.95px 7.5px 3.95px 7.5px;vertical-align:top;width:138.5px"><b>RR interval</b></td><td style="border:1px solid #1a3352;padding:3.95px 7.5px 3.95px 7.5px;vertical-align:top;width:123.5px">0.6–1.0 sec (at<br>60-100 bpm)</td><td style="border:1px solid #1a3352;padding:3.95px 7.5px 3.95px 7.5px;vertical-align:top;width:197px">Irregular: atrial fibrillation,<br>premature beats</td></tr></table></div>
<div class="nd card" style="left:763.5px;top:1019px;width:291px;height:409px"><div style="position:absolute;left:7.3px;font-size:12px;line-height:16.25px;color:#d6e4f0;white-space:nowrap;top:2.2px">What does the P wave represent on an ECG, and<br>in which lead is it best visualized?</div><div style="position:absolute;left:7.3px;font-size:12px;line-height:16.25px;color:#d6e4f0;white-space:nowrap;top:50.3px">The P wave represents <b>atrial depolarization</b>. It is<br>best visualized in <b>lead II</b> (upright) and <b>lead V1</b><br>(biphasic). Normal duration is &lt; 0.12 seconds<br>with amplitude &lt; 2.5 mm in lead II.</div><svg style="position:absolute;left:0;top:0" width="291" height="409"><rect x="20" y="139.29999999999995" width="45.5" height="27" fill="none" stroke="#1a3150" stroke-width="1"/><text x="23.5" y="146.5" font-size="6.2" fill="#0c1420" font-family="Liberation Sans"><tspan font-weight="bold">Q</tspan> wave</text><rect x="50.5" y="143.20000000000005" width="11.5" height="3" fill="#f5a623"/><text x="23.5" y="154.70000000000005" font-size="6.2" fill="#0c1420" font-family="Liberation Sans"><tspan font-weight="bold">R</tspan> wave</text><rect x="50.5" y="151.4000000000001" width="11.5" height="3" fill="#ee4b4f"/><text x="23.5" y="162.9000000000001" font-size="6.2" fill="#0c1420" font-family="Liberation Sans"><tspan font-weight="bold">S</tspan> wave</text><rect x="50.5" y="159.60000000000014" width="11.5" height="3" fill="#8e7cc3"/><path d="M7 310.29999999999995H282.5999999999999" stroke="#7f8b99" stroke-width="1" stroke-dasharray="4 3" fill="none"/><path d="M122.8 155.5V247.5" stroke="#8c98a8" stroke-width=".7" stroke-dasharray="1.6 1.6" fill="none"/><path d="M157.4 155.5V247.5" stroke="#8c98a8" stroke-width=".7" stroke-dasharray="1.6 1.6" fill="none"/><path d="M97.0 263.5V309.5" stroke="#8c98a8" stroke-width=".7" stroke-dasharray="1.6 1.6" fill="none"/><path d="M122.8 263.5V309.5" stroke="#8c98a8" stroke-width=".7" stroke-dasharray="1.6 1.6" fill="none"/><path d="M157.4 263.5V309.5" stroke="#8c98a8" stroke-width=".7" stroke-dasharray="1.6 1.6" fill="none"/><path d="M191.5 263.5V309.5" stroke="#8c98a8" stroke-width=".7" stroke-dasharray="1.6 1.6" fill="none"/><path d="M54.0 317.5V357.5" stroke="#8c98a8" stroke-width=".7" stroke-dasharray="1.6 1.6" fill="none"/><path d="M122.8 317.5V384.5" stroke="#8c98a8" stroke-width=".7" stroke-dasharray="1.6 1.6" fill="none"/><path d="M235.0 317.5V384.5" stroke="#8c98a8" stroke-width=".7" stroke-dasharray="1.6 1.6" fill="none"/><path d="M14.5 313.5C14 339.5 16 361.5 22 369.5" stroke="#9aa5b3" stroke-width="1" stroke-dasharray="3 2.500" fill="none"/><path d="M12.5 315.5L14.5 311.0L16.5 315.5Z" fill="#9aa5b3"/><path d="M18.700000000000045 310.29999999999995H54C63 310.29999999999995 69 296.0999999999999 80 296.0999999999999C89 296.0999999999999 92 310.29999999999995 97 310.29999999999995H122.79999999999995" stroke="#000" stroke-width="3" fill="none" stroke-linejoin="round"/><path d="M157.39999999999998 310.29999999999995H191.5C201 310.29999999999995 207 288.0 217.20000000000005 288.0C226 288.0 229 310.29999999999995 235 310.29999999999995H270.5" stroke="#000" stroke-width="3" fill="none" stroke-linejoin="round"/><path d="M122.79999999999995 310.29999999999995L131.79999999999995 328.70000000000005L133.60000000000002 311.29999999999995" stroke="#f5a93a" stroke-width="3" fill="none" stroke-linejoin="round" stroke-linecap="round"/><path d="M133.29999999999995 312.29999999999995L140.29999999999995 189.5L147 310.29999999999995" stroke="#ee4b4f" stroke-width="3.2" fill="none" stroke-linejoin="round" stroke-linecap="round"/><path d="M147 310.29999999999995L149.29999999999995 345.29999999999995L157.39999999999998 310.29999999999995" stroke="#8e7cc3" stroke-width="3" fill="none" stroke-linejoin="round" stroke-linecap="round"/><path d="M124.8 163.2H155.4" stroke="#d9432f" stroke-width="1.5" fill="none"/><path d="M122.8 163.2l3.500 -2.200v4.400zM157.4 163.2l-3.500 -2.200v4.400z" fill="#d9432f"/><path d="M99.0 268.4H120.8" stroke="#2eb85c" stroke-width="1.5" fill="none"/><path d="M97.0 268.4l3.500 -2.200v4.400zM122.8 268.4l-3.500 -2.200v4.400z" fill="#2eb85c"/><path d="M159.4 268.4H189.5" stroke="#a644c8" stroke-width="1.5" fill="none"/><path d="M157.4 268.4l3.500 -2.200v4.400zM191.5 268.4l-3.500 -2.200v4.400z" fill="#a644c8"/><path d="M56.0 352.8H120.8" stroke="#f39c12" stroke-width="1.5" fill="none"/><path d="M54.0 352.8l3.500 -2.200v4.400zM122.8 352.8l-3.500 -2.200v4.400z" fill="#f39c12"/><path d="M124.8 379.1H233.0" stroke="#2384d6" stroke-width="1.5" fill="none"/><path d="M122.8 379.1l3.500 -2.200v4.400zM235.0 379.1l-3.500 -2.200v4.400z" fill="#2384d6"/><text x="140.0" y="152.0" font-size="4.6" font-weight="bold" text-anchor="middle" fill="#0a1220" font-family="Liberation Sans">QRS</text><text x="140.0" y="158.0" font-size="4.6" font-weight="bold" text-anchor="middle" fill="#0a1220" font-family="Liberation Sans">Complex</text><text x="109.8" y="256.5" font-size="4.4" font-weight="bold" text-anchor="middle" fill="#0a1220" font-family="Liberation Sans">PR</text><text x="109.8" y="262.5" font-size="4.4" font-weight="bold" text-anchor="middle" fill="#0a1220" font-family="Liberation Sans">Segment</text><text x="174.0" y="256.5" font-size="4.4" font-weight="bold" text-anchor="middle" fill="#0a1220" font-family="Liberation Sans">ST</text><text x="174.0" y="262.5" font-size="4.4" font-weight="bold" text-anchor="middle" fill="#0a1220" font-family="Liberation Sans">Segment</text><text x="88.0" y="346.8" font-size="5.2" font-weight="bold" text-anchor="middle" fill="#0a1220" font-family="Liberation Sans">PR Interval</text><text x="178.0" y="373.0" font-size="5.4" font-weight="bold" text-anchor="middle" fill="#0a1220" font-family="Liberation Sans">QT Interval</text><text x="24" y="372.79999999999995" font-size="5.4" fill="#8f9cad" font-family="Liberation Sans">Baseline</text><circle cx="140.29999999999995" cy="177.0" r="7.2" fill="#1c3657" stroke="#17304f" stroke-width=".6"/><text x="140.29999999999995" y="181.0" font-size="11.500" font-weight="bold" text-anchor="middle" fill="#070b12" font-family="Liberation Sans">R</text><circle cx="81" cy="282.5" r="7.2" fill="#1c3657" stroke="#17304f" stroke-width=".6"/><text x="81" y="286.5" font-size="11.500" font-weight="bold" text-anchor="middle" fill="#070b12" font-family="Liberation Sans">P</text><circle cx="217" cy="276.5" r="7.2" fill="#1c3657" stroke="#17304f" stroke-width=".6"/><text x="217" y="280.5" font-size="11.500" font-weight="bold" text-anchor="middle" fill="#070b12" font-family="Liberation Sans">T</text><circle cx="131" cy="339.0" r="7.2" fill="#1c3657" stroke="#17304f" stroke-width=".6"/><text x="131" y="343.0" font-size="11.500" font-weight="bold" text-anchor="middle" fill="#070b12" font-family="Liberation Sans">Q</text><circle cx="149" cy="357.0999999999999" r="7.2" fill="#1c3657" stroke="#17304f" stroke-width=".6"/><text x="149" y="361.0999999999999" font-size="11.500" font-weight="bold" text-anchor="middle" fill="#070b12" font-family="Liberation Sans">S</text></svg></div>
<div class="nd card" style="left:838.3px;top:1435.7px;width:216.5px;height:90.8px"><div style="position:absolute;left:7.3px;font-size:12px;line-height:16.25px;color:#d6e4f0;white-space:nowrap;top:5.4px">type-in: true</div><div style="position:absolute;left:7.3px;font-size:12px;line-height:16.25px;color:#d6e4f0;white-space:nowrap;top:37.3px">The normal PR interval is <b><i>to</i></b> seconds</div><div style="position:absolute;left:8.3px;right:8px;top:61px;height:1px;background:#2b4567"></div><div style="position:absolute;left:7.3px;font-size:12px;line-height:16.25px;color:#d6e4f0;white-space:nowrap;top:70.3px">0.12 to 0.20</div></div>
<div class="nd card" style="left:764px;top:1533.6px;width:291px;height:369.6px"><div style="position:absolute;left:7.3px;font-size:12px;line-height:16.25px;color:#d6e4f0;white-space:nowrap;top:5.2px;line-height:16.3px">What is the mnemonic for distinguishing LBBB<br>from RBBB on ECG?</div><div style="position:absolute;left:7.3px;font-size:12px;line-height:16.25px;color:#d6e4f0;white-space:nowrap;top:52.5px"><b>"WiLLiaM MaRRoW"</b></div><div style="position:absolute;left:7.3px;font-size:12px;line-height:16.25px;color:#d6e4f0;white-space:nowrap;left:27.400px;top:84.7px;line-height:18.2px"><b>LBBB: W</b> in V1, <b>M</b> in V5-V6 (WiLLiaM)<br><b>RBBB: M</b> in V1, <b>W</b> in V5-V6 (MaRRoW)</div><div style="position:absolute;left:15.500px;top:92px;width:4px;height:4px;border-radius:50%;background:#7d7f86"></div><div style="position:absolute;left:15.500px;top:110.2px;width:4px;height:4px;border-radius:50%;background:#7d7f86"></div><div style="position:absolute;left:7.3px;font-size:12px;line-height:16.25px;color:#d6e4f0;white-space:nowrap;top:137px;line-height:16.3px">The M represents the rsR' pattern (two upward<br>deflections) and W represents the rS pattern (two<br>downward deflections).</div><svg style="position:absolute;left:6.6px;top:199.1px" width="275.6" height="162"><rect width="275.6" height="162" fill="#efedea"/><path d="M0.0 0V162M3.9 0V162M7.8 0V162M11.6 0V162M15.5 0V162M19.4 0V162M23.3 0V162M27.2 0V162M31.1 0V162M34.9 0V162M38.8 0V162M42.7 0V162M46.6 0V162M50.5 0V162M54.3 0V162M58.2 0V162M62.1 0V162M66.0 0V162M69.9 0V162M73.8 0V162M77.6 0V162M81.5 0V162M85.4 0V162M89.3 0V162M93.2 0V162M97.0 0V162M100.9 0V162M104.8 0V162M108.7 0V162M112.6 0V162M116.5 0V162M120.3 0V162M124.2 0V162M128.1 0V162M132.0 0V162M135.9 0V162M139.7 0V162M143.6 0V162M147.5 0V162M151.4 0V162M155.3 0V162M159.1 0V162M163.0 0V162M166.9 0V162M170.8 0V162M174.7 0V162M178.6 0V162M182.4 0V162M186.3 0V162M190.2 0V162M194.1 0V162M198.0 0V162M201.8 0V162M205.7 0V162M209.6 0V162M213.5 0V162M217.4 0V162M221.3 0V162M225.1 0V162M229.0 0V162M232.9 0V162M236.8 0V162M240.7 0V162M244.5 0V162M248.4 0V162M252.3 0V162M256.2 0V162M260.1 0V162M264.0 0V162M267.8 0V162M271.7 0V162M0 0.0H275.6M0 3.9H275.6M0 7.8H275.6M0 11.6H275.6M0 15.5H275.6M0 19.4H275.6M0 23.3H275.6M0 27.2H275.6M0 31.1H275.6M0 34.9H275.6M0 38.8H275.6M0 42.7H275.6M0 46.6H275.6M0 50.5H275.6M0 54.3H275.6M0 58.2H275.6M0 62.1H275.6M0 66.0H275.6M0 69.9H275.6M0 73.8H275.6M0 77.6H275.6M0 81.5H275.6M0 85.4H275.6M0 89.3H275.6M0 93.2H275.6M0 97.0H275.6M0 100.9H275.6M0 104.8H275.6M0 108.7H275.6M0 112.6H275.6M0 116.5H275.6M0 120.3H275.6M0 124.2H275.6M0 128.1H275.6M0 132.0H275.6M0 135.9H275.6M0 139.7H275.6M0 143.6H275.6M0 147.5H275.6M0 151.4H275.6M0 155.3H275.6M0 159.1H275.6" stroke="#cfcbc6" stroke-width=".45" fill="none"/><path d="M0.0 0V162M19.4 0V162M38.8 0V162M58.2 0V162M77.6 0V162M97.0 0V162M116.5 0V162M135.9 0V162M155.3 0V162M174.7 0V162M194.1 0V162M213.5 0V162M232.9 0V162M252.3 0V162M271.7 0V162M0 0.0H275.6M0 19.4H275.6M0 38.8H275.6M0 58.2H275.6M0 77.6H275.6M0 97.0H275.6M0 116.5H275.6M0 135.9H275.6M0 155.3H275.6" stroke="#b9b4ae" stroke-width=".6" fill="none"/><rect x="134.2" y="0" width="6" height="162" fill="#f3e7d9" opacity=".7"/><rect x="40.0" y="23.3" width="7" height="5" fill="#f0b548" opacity=".9"/><rect x="161.0" y="24.3" width="6" height="4" fill="#f0b548" opacity=".9"/><rect x="222.0" y="17.3" width="9" height="11" fill="#f0b548" opacity=".9"/><rect x="102.0" y="63.7" width="5.5" height="6" fill="#f0b548" opacity=".9"/><rect x="161.4" y="58.7" width="8" height="11" fill="#f0b548" opacity=".9"/><rect x="223.0" y="63.7" width="7" height="6" fill="#f0b548" opacity=".9"/><rect x="40.2" y="68.7" width="5" height="4" fill="#4db4e6" opacity=".9"/><rect x="54.4" y="114.0" width="7" height="6" fill="#4db4e6" opacity=".9"/><rect x="101.2" y="114.0" width="6" height="6" fill="#4db4e6" opacity=".9"/><rect x="161.4" y="109.5" width="8" height="5.5" fill="#f0b548" opacity=".9"/><rect x="101.2" y="148.8" width="6" height="5" fill="#4db4e6" opacity=".9"/><polyline points="2.5,17.3 3.5,17.3 4.0,28.3 6.5,28.0 8.1,27.7 9.7,28.7 11.3,28.3 12.1,23.3 12.9,30.8 13.7,28.3 16.3,25.8 18.8,28.3 19.8,27.7 21.5,28.4 23.2,28.1 24.8,27.5 26.4,28.4 28.0,28.3 28.8,23.3 29.6,30.8 30.4,28.3 33.0,25.8 35.5,28.3 36.5,27.6 38.2,28.2 39.9,27.5 41.5,27.5 43.1,28.2 44.7,28.3 45.5,23.3 46.3,30.8 47.1,28.3 49.7,25.8 52.2,28.3 53.2,28.9 54.9,27.7 56.6,27.8 58.2,28.6 59.8,29.2 61.4,28.3 62.2,23.3 63.0,30.8 63.8,28.3 66.4,25.8 68.9,28.3 69.9,28.5 71.6,28.2 73.3,29.3 74.9,27.4 76.5,29.1 78.1,28.3 78.9,23.3 79.7,30.8 80.5,28.3 83.1,25.8 85.6,28.3 86.6,28.0 88.3,27.8 90.0,27.6 91.6,28.0 93.2,29.0 94.8,28.3 95.6,23.3 96.4,30.8 97.2,28.3 99.8,25.8 102.3,28.3 103.3,27.8 105.0,28.5 106.7,28.6 108.3,28.1 109.9,28.4 111.5,28.3 112.3,23.3 113.1,30.8 113.9,28.3 116.5,25.8 119.0,28.3 120.0,27.7 121.7,27.6 123.4,27.8 125.0,28.7 126.6,28.2 128.2,28.3 129.0,23.3 129.8,30.8 130.6,28.3 133.2,25.8 135.7,28.3 136.7,28.1 138.4,28.5 140.1,28.3 141.7,27.9 143.3,28.9 144.9,28.3 145.7,23.3 146.5,30.8 147.3,28.3 149.9,25.8 152.4,28.3 153.4,28.7 155.1,27.9 156.8,28.5 158.4,28.4 160.0,29.1 161.6,28.3 162.4,23.3 163.2,30.8 164.0,28.3 166.6,25.8 169.1,28.3 170.1,28.7 171.8,28.0 173.5,29.3 175.1,27.6 176.7,28.2 178.3,28.3 179.1,23.3 179.9,30.8 180.7,28.3 183.3,25.8 185.8,28.3 186.8,28.8 188.5,27.8 190.2,28.3 191.8,27.4 193.4,28.7 195.0,28.3 195.8,23.3 196.6,30.8 197.4,28.3 200.0,25.8 202.5,28.3 203.5,28.8 205.2,28.5 206.9,29.1 208.5,28.0 210.1,28.7 211.7,29.3 212.7,37.3 214.2,20.3 216.7,17.3 219.7,21.3 221.7,29.3 222.7,28.5 224.4,28.5 226.1,28.3 227.7,29.0 229.3,29.2 230.9,29.3 231.9,37.3 233.4,20.3 235.9,17.3 238.9,21.3 240.9,29.3 241.9,28.3 243.6,28.6 245.3,27.5 246.9,28.8 248.5,28.6 250.1,29.3 251.1,37.3 252.6,20.3 255.1,17.3 258.1,21.3 260.1,29.3 261.1,29.1 262.8,28.9 264.5,27.9 266.1,28.1 267.7,28.7 269.3,29.3 270.3,37.3 271.8,20.3 274.3,17.3" stroke="#2a2a2a" stroke-width=".65" fill="none" stroke-linejoin="round"/><polyline points="2.5,58.7 3.5,58.7 4.0,69.7 6.5,69.0 8.1,68.9 9.7,68.8 11.3,68.7 12.1,66.7 12.9,76.7 13.9,69.7 16.3,67.2 18.3,69.7 19.3,70.1 21.0,69.1 22.7,69.2 24.3,69.4 25.9,70.4 27.5,68.7 28.3,66.7 29.1,76.7 30.1,69.7 32.5,67.2 34.5,69.7 35.5,69.0 37.2,69.6 38.9,69.8 40.5,70.4 42.1,70.3 43.7,68.7 44.5,66.7 45.3,76.7 46.3,69.7 48.7,67.2 50.7,69.7 51.7,70.2 53.4,69.3 55.1,69.5 56.7,69.4 58.3,70.4 59.9,68.7 60.7,66.7 61.5,76.7 62.5,69.7 64.9,67.2 66.9,69.7 67.9,70.4 69.6,69.1 71.3,69.0 72.9,69.1 74.5,69.1 76.1,69.7 76.9,64.7 77.7,72.2 78.5,69.7 81.1,67.2 83.6,69.7 84.6,69.6 86.3,69.8 88.0,69.2 89.6,68.7 91.2,69.5 92.8,69.7 93.6,64.7 94.4,72.2 95.2,69.7 97.8,67.2 100.3,69.7 101.3,69.5 103.0,69.8 104.7,70.6 106.3,70.0 107.9,69.7 109.5,69.7 110.3,64.7 111.1,72.2 111.9,69.7 114.5,67.2 117.0,69.7 118.0,69.8 119.7,69.9 121.4,68.8 123.0,70.5 124.6,70.2 126.2,69.7 127.0,64.7 127.8,72.2 128.6,69.7 131.2,67.2 133.7,69.7 134.7,70.3 136.4,70.1 138.1,69.4 139.7,69.5 141.3,68.9 142.9,70.7 143.9,78.7 145.4,61.7 147.9,58.7 150.9,62.7 152.9,70.7 153.9,69.9 155.6,69.0 157.3,68.8 158.9,69.1 160.5,69.0 162.1,70.7 163.1,78.7 164.6,61.7 167.1,58.7 170.1,62.7 172.1,70.7 173.1,69.4 174.8,68.9 176.5,68.7 178.1,69.0 179.7,68.9 181.3,70.7 182.3,78.7 183.8,61.7 186.3,58.7 189.3,62.7 191.3,70.7 192.3,69.4 194.0,68.9 195.7,70.4 197.3,69.9 198.9,69.0 200.5,70.7 201.5,78.7 203.0,61.7 205.5,58.7 208.5,62.7 210.5,70.7 211.5,69.3 213.2,69.4 214.9,69.4 216.5,68.9 218.1,70.4 219.7,69.7 220.5,64.7 221.3,72.2 222.1,69.7 224.7,67.2 227.2,69.7 228.2,70.4 229.9,69.6 231.6,69.6 233.2,68.8 234.8,68.9 236.4,69.7 237.2,64.7 238.0,72.2 238.8,69.7 241.4,67.2 243.9,69.7 244.9,69.4 246.6,69.3 248.3,70.3 249.9,69.0 251.5,68.7 253.1,69.7 253.9,64.7 254.7,72.2 255.5,69.7 258.1,67.2 260.6,69.7 261.6,70.4 263.3,69.7 265.0,69.0 266.6,69.7 268.2,68.7 269.8,69.7 270.6,64.7 271.4,72.2 272.2,69.7" stroke="#2a2a2a" stroke-width=".65" fill="none" stroke-linejoin="round"/><polyline points="2.5,104.0 3.5,104.0 4.0,115.0 6.5,115.7 8.1,115.4 9.7,114.5 11.3,114.0 12.1,112.0 12.9,122.0 13.9,115.0 16.3,112.5 18.3,115.0 19.3,114.8 21.0,114.5 22.7,115.6 24.3,115.1 25.9,115.6 27.5,114.0 28.3,112.0 29.1,122.0 30.1,115.0 32.5,112.5 34.5,115.0 35.5,114.7 37.2,114.6 38.9,115.6 40.5,116.0 42.1,115.7 43.7,114.0 44.5,112.0 45.3,122.0 46.3,115.0 48.7,112.5 50.7,115.0 51.7,115.5 53.4,115.5 55.1,115.5 56.7,114.5 58.3,115.1 59.9,114.0 60.7,112.0 61.5,122.0 62.5,115.0 64.9,112.5 66.9,115.0 67.9,114.8 69.6,114.3 71.3,114.1 72.9,114.6 74.5,114.5 76.1,114.0 76.9,112.0 77.7,122.0 78.7,115.0 81.1,112.5 83.1,115.0 84.1,115.3 85.8,115.8 87.5,114.9 89.1,115.9 90.7,116.0 92.3,114.0 93.1,112.0 93.9,122.0 94.9,115.0 97.3,112.5 99.3,115.0 100.3,115.7 102.0,114.8 103.7,114.5 105.3,114.5 106.9,114.4 108.5,114.0 109.3,112.0 110.1,122.0 111.1,115.0 113.5,112.5 115.5,115.0 116.5,114.5 118.2,115.2 119.9,115.8 121.5,115.7 123.1,115.0 124.7,114.0 125.5,112.0 126.3,122.0 127.3,115.0 129.7,112.5 131.7,115.0 132.7,115.3 134.4,115.5 136.1,114.2 137.7,115.3 139.3,115.8 140.9,114.0 141.7,112.0 142.5,122.0 143.5,115.0 145.9,112.5 147.9,115.0 148.9,115.5 150.6,115.4 152.3,115.0 153.9,114.4 155.5,115.6 157.1,114.0 157.9,112.0 158.7,122.0 159.7,115.0 162.1,112.5 164.1,115.0 165.1,114.8 166.8,115.5 168.5,116.0 170.1,114.8 171.7,114.8 173.3,114.0 174.1,112.0 174.9,122.0 175.9,115.0 178.3,112.5 180.3,115.0 181.3,115.7 183.0,115.4 184.7,114.4 186.3,114.3 187.9,114.3 189.5,114.0 190.3,112.0 191.1,122.0 192.1,115.0 194.5,112.5 196.5,115.0 197.5,115.7 199.2,115.5 200.9,114.3 202.5,115.7 204.1,116.0 205.7,114.0 206.5,112.0 207.3,122.0 208.3,115.0 210.7,112.5 212.7,115.0 213.7,115.3 215.4,114.8 217.1,115.1 218.7,114.3 220.3,114.0 221.9,114.0 222.7,112.0 223.5,122.0 224.5,115.0 226.9,112.5 228.9,115.0 229.9,115.8 231.6,115.3 233.3,115.1 234.9,115.9 236.5,114.9 238.1,114.0 238.9,112.0 239.7,122.0 240.7,115.0 243.1,112.5 245.1,115.0 246.1,115.6 247.8,115.5 249.5,114.4 251.1,114.5 252.7,114.6 254.3,114.0 255.1,112.0 255.9,122.0 256.9,115.0 259.3,112.5 261.3,115.0 262.3,114.6 264.0,115.2 265.7,114.5 267.3,114.9 268.9,114.3 270.5,114.0 271.3,112.0 272.1,122.0 273.1,115.0" stroke="#2a2a2a" stroke-width=".65" fill="none" stroke-linejoin="round"/><polyline points="2.5,138.8 3.5,138.8 4.0,149.8 6.5,149.8 8.1,150.0 9.7,150.7 11.3,148.8 12.1,146.8 12.9,156.8 13.9,149.8 16.3,147.3 18.3,149.8 19.3,149.7 21.0,150.5 22.7,149.9 24.3,149.9 25.9,149.9 27.5,148.8 28.3,146.8 29.1,156.8 30.1,149.8 32.5,147.3 34.5,149.8 35.5,149.1 37.2,149.8 38.9,149.2 40.5,148.9 42.1,150.4 43.7,148.8 44.5,146.8 45.3,156.8 46.3,149.8 48.7,147.3 50.7,149.8 51.7,149.3 53.4,149.8 55.1,150.3 56.7,150.0 58.3,149.5 59.9,148.8 60.7,146.8 61.5,156.8 62.5,149.8 64.9,147.3 66.9,149.8 67.9,149.9 69.6,149.9 71.3,150.4 72.9,149.1 74.5,150.0 76.1,148.8 76.9,146.8 77.7,156.8 78.7,149.8 81.1,147.3 83.1,149.8 84.1,149.4 85.8,149.5 87.5,150.4 89.1,149.9 90.7,150.0 92.3,148.8 93.1,146.8 93.9,156.8 94.9,149.8 97.3,147.3 99.3,149.8 100.3,150.3 102.0,150.5 103.7,149.7 105.3,150.1 106.9,149.9 108.5,148.8 109.3,146.8 110.1,156.8 111.1,149.8 113.5,147.3 115.5,149.8 116.5,149.9 118.2,150.2 119.9,149.8 121.5,149.9 123.1,149.8 124.7,148.8 125.5,146.8 126.3,156.8 127.3,149.8 129.7,147.3 131.7,149.8 132.7,150.6 134.4,150.2 136.1,150.6 137.7,150.7 139.3,149.4 140.9,148.8 141.7,146.8 142.5,156.8 143.5,149.8 145.9,147.3 147.9,149.8 148.9,149.9 150.6,150.6 152.3,150.5 153.9,149.1 155.5,149.1 157.1,148.8 157.9,146.8 158.7,156.8 159.7,149.8 162.1,147.3 164.1,149.8 165.1,149.8 166.8,149.2 168.5,149.3 170.1,149.0 171.7,150.2 173.3,148.8 174.1,146.8 174.9,156.8 175.9,149.8 178.3,147.3 180.3,149.8 181.3,150.3 183.0,150.5 184.7,149.2 186.3,150.3 187.9,150.2 189.5,148.8 190.3,146.8 191.1,156.8 192.1,149.8 194.5,147.3 196.5,149.8 197.5,149.3 199.2,150.5 200.9,150.8 202.5,149.3 204.1,150.8 205.7,148.8 206.5,146.8 207.3,156.8 208.3,149.8 210.7,147.3 212.7,149.8 213.7,149.7 215.4,149.8 217.1,150.8 218.7,150.5 220.3,149.2 221.9,148.8 222.7,146.8 223.5,156.8 224.5,149.8 226.9,147.3 228.9,149.8 229.9,149.7 231.6,149.9 233.3,149.5 234.9,149.2 236.5,149.5 238.1,148.8 238.9,146.8 239.7,156.8 240.7,149.8 243.1,147.3 245.1,149.8 246.1,150.2 247.8,149.1 249.5,150.0 251.1,149.7 252.7,148.9 254.3,148.8 255.1,146.8 255.9,156.8 256.9,149.8 259.3,147.3 261.3,149.8 262.3,149.6 264.0,150.0 265.7,149.9 267.3,149.0 268.9,150.8 270.5,148.8 271.3,146.8 272.1,156.8 273.1,149.8" stroke="#2a2a2a" stroke-width=".65" fill="none" stroke-linejoin="round"/></svg></div>
<div class="nd card" style="left:764px;top:1910.5px;width:291px;height:147.6px"><div style="position:absolute;left:7.3px;font-size:12px;line-height:16.25px;color:#d6e4f0;white-space:nowrap;top:17px;line-height:16.4px">The earliest ECG sign of hyperkalemia is<br>########, which can progress to ######## and<br>eventually a ######## pattern</div><div style="position:absolute;left:8.3px;right:8px;top:73.5px;height:1px;background:#3a4654"></div><div style="position:absolute;left:7.3px;font-size:12px;line-height:16.25px;color:#d6e4f0;white-space:nowrap;top:82.9px;line-height:16.4px">The earliest ECG sign of hyperkalemia is <span style="background:#7a7435;color:#e6e2c4">peaked T</span><br><span style="background:#7a7435;color:#e6e2c4">waves</span>, which can progress to <span style="background:#7a7435;color:#e6e2c4">widened QRS</span> and<br>eventually a <span style="background:#7a7435;color:#e6e2c4">sine wave</span> pattern</div></div>
<div class="abs" style="left:951.5px;top:2083.3px;width:1376.5px;height:64.6px;border-radius:16px;background:#262626;border:1.5px solid #313131;box-shadow:0 3px 10px rgba(0,0,0,.35)"></div><svg style="position:absolute;left:971.5px;top:2099.9px;color:#aaa;" width="31.5" height="31.5" viewBox="0 0 24 24" fill="none" stroke="currentColor" stroke-width="1.75" stroke-linecap="round" stroke-linejoin="round"><path d="M8 3H5a2 2 0 0 0-2 2v3"/><path d="M21 8V5a2 2 0 0 0-2-2h-3"/><path d="M3 16v3a2 2 0 0 0 2 2h3"/><path d="M16 21h3a2 2 0 0 0 2-2v-3"/></svg><svg style="position:absolute;left:1023.8px;top:2099.9px;color:#aaa;" width="31.5" height="31.5" viewBox="0 0 24 24" fill="none" stroke="currentColor" stroke-width="1.75" stroke-linecap="round" stroke-linejoin="round"><circle cx="11" cy="11" r="8"/><line x1="21" x2="16.650" y1="21" y2="16.650"/><line x1="11" x2="11" y1="8" y2="14"/><line x1="8" x2="14" y1="11" y2="11"/></svg><svg style="position:absolute;left:1076.2px;top:2099.9px;color:#aaa;" width="31.5" height="31.5" viewBox="0 0 24 24" fill="none" stroke="currentColor" stroke-width="1.75" stroke-linecap="round" stroke-linejoin="round"><circle cx="11" cy="11" r="8"/><line x1="21" x2="16.650" y1="21" y2="16.650"/><line x1="8" x2="14" y1="11" y2="11"/></svg><svg style="position:absolute;left:1128.7px;top:2099.9px;color:#aaa;" width="31.5" height="31.5" viewBox="0 0 24 24" fill="none" stroke="currentColor" stroke-width="1.75" stroke-linecap="round" stroke-linejoin="round"><path d="M15 21v-8a1 1 0 0 0-1-1h-4a1 1 0 0 0-1 1v8"/><path d="M3 10a2 2 0 0 1 .709-1.528l7-5.999a2 2 0 0 1 2.582 0l7 5.999A2 2 0 0 1 21 10v9a2 2 0 0 1-2 2H5a2 2 0 0 1-2-2z"/></svg><svg style="position:absolute;left:1200.5px;top:2099.9px;color:#aaa;" width="31.5" height="31.5" viewBox="0 0 24 24" fill="none" stroke="currentColor" stroke-width="1.75" stroke-linecap="round" stroke-linejoin="round"><path d="m7 20 5-5 5 5"/><path d="m7 4 5 5 5-5"/></svg><svg style="position:absolute;left:1253.0px;top:2099.9px;color:#aaa;" width="31.5" height="31.5" viewBox="0 0 24 24" fill="none" stroke="currentColor" stroke-width="1.75" stroke-linecap="round" stroke-linejoin="round"><path d="m7 15 5 5 5-5"/><path d="m7 9 5-5 5 5"/></svg><svg style="position:absolute;left:1324.7px;top:2099.9px;color:#aaa;" width="31.5" height="31.5" viewBox="0 0 24 24" fill="none" stroke="currentColor" stroke-width="1.75" stroke-linecap="round" stroke-linejoin="round"><path d="M17 12H3"/><path d="m11 18 6-6-6-6"/><path d="M21 5v14"/></svg><svg style="position:absolute;left:1377.2px;top:2099.9px;color:#aaa;" width="31.5" height="31.5" viewBox="0 0 24 24" fill="none" stroke="currentColor" stroke-width="1.75" stroke-linecap="round" stroke-linejoin="round"><path d="M19 3H5"/><path d="M12 21V7"/><path d="m6 15 6 6 6-6"/></svg><svg style="position:absolute;left:1429.7px;top:2099.9px;color:#aaa;" width="31.5" height="31.5" viewBox="0 0 24 24" fill="none" stroke="currentColor" stroke-width="1.75" stroke-linecap="round" stroke-linejoin="round"><path d="M3 5v14"/><path d="M21 12H7"/><path d="m15 18 6-6-6-6"/></svg><svg style="position:absolute;left:1501.8px;top:2099.9px;color:#aaa;" width="31.5" height="31.5" viewBox="0 0 24 24" fill="none" stroke="currentColor" stroke-width="1.75" stroke-linecap="round" stroke-linejoin="round"><path d="m5 12 7-7 7 7"/><path d="M12 19V5"/></svg><svg style="position:absolute;left:1554.2px;top:2099.9px;color:#aaa;" width="31.5" height="31.5" viewBox="0 0 24 24" fill="none" stroke="currentColor" stroke-width="1.75" stroke-linecap="round" stroke-linejoin="round"><path d="M12 5v14"/><path d="m19 12-7 7-7-7"/></svg><svg style="position:absolute;left:1606.7px;top:2099.9px;color:#aaa;" width="31.5" height="31.5" viewBox="0 0 24 24" fill="none" stroke="currentColor" stroke-width="1.75" stroke-linecap="round" stroke-linejoin="round"><path d="m12 19-7-7 7-7"/><path d="M19 12H5"/></svg><svg style="position:absolute;left:1659.2px;top:2099.9px;color:#aaa;" width="31.5" height="31.5" viewBox="0 0 24 24" fill="none" stroke="currentColor" stroke-width="1.75" stroke-linecap="round" stroke-linejoin="round"><path d="M5 12h14"/><path d="m12 5 7 7-7 7"/></svg><svg style="position:absolute;left:1730.5px;top:2099.9px;color:#aaa;" width="31.5" height="31.5" viewBox="0 0 24 24" fill="none" stroke="currentColor" stroke-width="1.75" stroke-linecap="round" stroke-linejoin="round"><path d="M3 6h18"/><path d="M19 6v14c0 1-1 2-2 2H7c-1 0-2-1-2-2V6"/><path d="M8 6V4c0-1 1-2 2-2h4c1 0 2 1 2 2v2"/><line x1="10" x2="10" y1="11" y2="17"/><line x1="14" x2="14" y1="11" y2="17"/></svg><svg style="position:absolute;left:1802.5px;top:2099.9px;color:#aaa;" width="31.5" height="31.5" viewBox="0 0 24 24" fill="none" stroke="currentColor" stroke-width="1.75" stroke-linecap="round" stroke-linejoin="round"><rect width="14" height="14" x="8" y="8" rx="2" ry="2"/><path d="M4 16c-1.100 0-2-.9-2-2V4c0-1.100.9-2 2-2h10c1.100 0 2 .9 2 2"/></svg><svg style="position:absolute;left:1855.0px;top:2099.9px;color:#aaa;" width="31.5" height="31.5" viewBox="0 0 24 24" fill="none" stroke="currentColor" stroke-width="1.75" stroke-linecap="round" stroke-linejoin="round"><circle cx="6" cy="6" r="3"/><path d="M8.120 8.120 12 12"/><path d="M20 4 8.120 15.880"/><circle cx="6" cy="18" r="3"/><path d="M14.800 14.800 20 20"/></svg><svg style="position:absolute;left:1907.5px;top:2099.9px;color:#aaa;" width="31.5" height="31.5" viewBox="0 0 24 24" fill="none" stroke="currentColor" stroke-width="1.75" stroke-linecap="round" stroke-linejoin="round"><path d="M15 2H9a1 1 0 0 0-1 1v2c0 .6.4 1 1 1h6c.6 0 1-.4 1-1V3c0-.6-.4-1-1-1Z"/><path d="M8 4H6a2 2 0 0 0-2 2v14a2 2 0 0 0 2 2h12a2 2 0 0 0 2-2M16 4h2a2 2 0 0 1 2 2v2M11 14h10"/><path d="m17 10 4 4-4 4"/></svg><svg style="position:absolute;left:1979.0px;top:2099.9px;color:#aaa;" width="31.5" height="31.5" viewBox="0 0 24 24" fill="none" stroke="currentColor" stroke-width="1.75" stroke-linecap="round" stroke-linejoin="round"><path d="m2 22 1-1h3l9-9"/><path d="M3 21v-3l9-9"/><path d="m15 6 3.400-3.400a2.100 2.100 0 1 1 3 3L18 9l.4.400a2.100 2.100 0 1 1-3 3l-3.800-3.800a2.100 2.100 0 1 1 3-3l.4.400Z"/></svg><svg style="position:absolute;left:2031.5px;top:2099.9px;color:#aaa;" width="31.5" height="31.5" viewBox="0 0 24 24" fill="none" stroke="currentColor" stroke-width="1.75" stroke-linecap="round" stroke-linejoin="round"><path d="m19 11-8-8-8.600 8.600a2 2 0 0 0 0 2.800l5.200 5.200c.8.800 2 .8 2.800 0L19 11Z"/><path d="m5 2 5 5"/><path d="M2 13h15"/><path d="M22 20a2 2 0 1 1-4 0c0-1.600 1.700-2.400 2-4 .3 1.600 2 2.400 2 4Z"/></svg><svg style="position:absolute;left:2103.4px;top:2099.9px;color:#aaa;" width="31.5" height="31.5" viewBox="0 0 24 24" fill="none" stroke="currentColor" stroke-width="1.75" stroke-linecap="round" stroke-linejoin="round"><path d="M9 14 4 9l5-5"/><path d="M4 9h10.500a5.500 5.500 0 0 1 5.500 5.500a5.500 5.500 0 0 1-5.500 5.500H11"/></svg><svg style="position:absolute;left:2155.9px;top:2099.9px;color:#aaa;" width="31.5" height="31.5" viewBox="0 0 24 24" fill="none" stroke="currentColor" stroke-width="1.75" stroke-linecap="round" stroke-linejoin="round"><path d="m15 14 5-5-5-5"/><path d="M20 9H9.500A5.500 5.500 0 0 0 4 14.500A5.500 5.500 0 0 0 9.500 20H13"/></svg><svg style="position:absolute;left:2227.8px;top:2099.9px;color:#aaa;" width="31.5" height="31.5" viewBox="0 0 24 24" fill="none" stroke="currentColor" stroke-width="1.75" stroke-linecap="round" stroke-linejoin="round"><path d="M3 12a9 9 0 0 1 9-9 9.750 9.750 0 0 1 6.740 2.740L21 8"/><path d="M21 3v5h-5"/><path d="M21 12a9 9 0 0 1-9 9 9.750 9.750 0 0 1-6.740-2.740L3 16"/><path d="M8 16H3v5"/></svg><svg style="position:absolute;left:2280.3px;top:2099.9px;color:#aaa;" width="31.5" height="31.5" viewBox="0 0 24 24" fill="none" stroke="currentColor" stroke-width="1.75" stroke-linecap="round" stroke-linejoin="round"><path d="M18.370 2.630 14 7l-1.590-1.590a2 2 0 0 0-2.820 0L8 7l9 9 1.590-1.590a2 2 0 0 0 0-2.820L17 10l4.370-4.370a2.120 2.120 0 1 0-3-3Z"/><path d="M9 8c-2 3-4 3.500-7 4l8 10c2-1 6-5 6-7"/><path d="M14.500 17.500 4.500 15"/></svg><div class="abs" style="left:1179.6999999999998px;top:2098px;width:1.8px;height:35.5px;background:#3c3c3c"></div><div class="abs" style="left:1303.6px;top:2098px;width:1.8px;height:35.5px;background:#3c3c3c"></div><div class="abs" style="left:1480.6999999999998px;top:2098px;width:1.8px;height:35.5px;background:#3c3c3c"></div><div class="abs" style="left:1709.6999999999998px;top:2098px;width:1.8px;height:35.5px;background:#3c3c3c"></div><div class="abs" style="left:1781.6px;top:2098px;width:1.8px;height:35.5px;background:#3c3c3c"></div><div class="abs" style="left:1958.3999999999999px;top:2098px;width:1.8px;height:35.5px;background:#3c3c3c"></div><div class="abs" style="left:2082.4px;top:2098px;width:1.8px;height:35.5px;background:#3c3c3c"></div><div class="abs" style="left:2206.7999999999997px;top:2098px;width:1.8px;height:35.5px;background:#3c3c3c"></div>
<svg class="abs" style="left:1645px;top:1588px" width="42" height="42"><path d="M8.8 3.5L8.8 1.8L10.8 1.8L15.8 1.8L17.8 1.8L17.8 0.0L24.5 0.0L24.5 1.8L32.6 1.8L32.6 8.8L39.9 8.8L39.9 19.6L38.0 19.6L38.0 26.2L36.1 26.2L36.1 30.8L33.6 30.8L33.6 35.0L31.5 35.0L31.5 39.9L11.0 39.9L11.0 33.9L0.0 22.8L0.0 18.2L8.8 18.2Z" fill="#000"/><path d="M11.0 5.2L11.0 3.9L15.0 3.9L15.0 5.2L19.9 5.2L19.9 2.1L22.6 2.1L22.6 5.2L27.3 5.2L27.3 3.9L30.6 3.9L30.6 10.8L37.8 10.8L37.8 18.2L36.1 18.2L36.1 24.5L33.9 24.5L33.9 29.1L31.5 29.1L31.5 33.2L29.6 33.2L29.6 37.6L13.1 37.6L13.1 32.9L2.3 22.1L2.3 20.3L7.9 20.3L11.0 22.8Z" fill="#eef4fc"/><rect x="15.4" y="5.2" width="4.2" height="12.8" fill="#1a1a1a"/><rect x="22.9" y="2.3" width="4.0" height="15.8" fill="#1a1a1a"/><rect x="30.8" y="11.0" width="2.4" height="8.6" fill="#1a1a1a"/><rect x="16.8" y="5.2" width="1.9" height="8.8" fill="#8a8f96"/><rect x="24.8" y="12.2" width="1.8" height="5.8" fill="#8a8f96"/></svg>
<div class="abs" style="left:3206px;top:70px;width:525px;height:2090px;background:#262626;border-left:1.5px solid #363636"></div>
<div class="abs" style="left:3227px;top:85.6px;width:462px;height:1.5px;background:#363636"></div>
<div class="abs" style="left:3713px;top:807px;width:12.5px;height:1320px;border-radius:6px;background:#3f3f3f"></div>
<div class="pcard" style="top:100.5px;height:150px"><div class="hd"></div></div>
<svg style="position:absolute;left:3252.9px;top:120.2px;color:#7d7d7d;" width="24.5" height="24.5" viewBox="0 0 24 24" fill="none" stroke="currentColor" stroke-width="1.6" stroke-linecap="round" stroke-linejoin="round"><path d="m6 9 6 6 6-6"/></svg>
<div class="ptitle" style="top:118.0px">Background</div>
<div class="btn" style="left:3622.5px;top:112.2px;width:41.2px;height:40.4px;justify-content:center"></div>
<svg class="abs" style="left:3626.3px;top:117.19999999999999px" width="32" height="32" viewBox="-16 -16 32 32"><path d="M0.6 -8.100A8.100 8.100 0 1 1 -8.100 0" fill="none" stroke="#dcdcdc" stroke-width="2.45"/><path d="M-4.900 -7.800L1.100 -13.200V-2.500Z" fill="#dcdcdc"/></svg>
<div class="plabel" style="top:185.0px;letter-spacing:0px">Color</div>
<div class="sw" style="top:174.0px;background:#0d1b2a;border:1.5px solid #363636"></div>
<div class="pcard" style="top:268.4px;height:374.3px"><div class="hd"></div></div>
<svg style="position:absolute;left:3252.9px;top:288.1px;color:#7d7d7d;" width="24.5" height="24.5" viewBox="0 0 24 24" fill="none" stroke="currentColor" stroke-width="1.6" stroke-linecap="round" stroke-linejoin="round"><path d="m6 9 6 6 6-6"/></svg>
<div class="ptitle" style="top:285.9px">Default shape</div>
<div class="btn" style="left:3622.5px;top:280.09999999999997px;width:41.2px;height:40.4px;justify-content:center"></div>
<svg class="abs" style="left:3626.3px;top:285.09999999999997px" width="32" height="32" viewBox="-16 -16 32 32"><path d="M0.6 -8.100A8.100 8.100 0 1 1 -8.100 0" fill="none" stroke="#dcdcdc" stroke-width="2.45"/><path d="M-4.900 -7.800L1.100 -13.200V-2.500Z" fill="#dcdcdc"/></svg>
<div class="plabel" style="top:354.0px;letter-spacing:-0.7px">Shape</div>
<div class="btn" style="left:3411px;top:341.7px;width:252.8px;height:51.4px;padding-left:18px;letter-spacing:0px">Pill</div>
<svg style="position:absolute;left:3629.6px;top:356.4px;color:#bdbdbd;" width="22" height="22" viewBox="0 0 24 24" fill="none" stroke="currentColor" stroke-width="2.1" stroke-linecap="round" stroke-linejoin="round"><path d="m7 15 5 5 5-5"/><path d="m7 9 5-5 5 5"/></svg>
<div class="plabel" style="top:422.8px;letter-spacing:0.5px">Width</div>
<div class="pdesc" style="top:458.7px;letter-spacing:0px">Content width in px (blank =</div>
<div class="pdesc" style="top:481.4px;letter-spacing:0px">auto)</div>
<div class="abs" style="left:3541px;top:436.4px;width:122.8px;height:52.4px;border-radius:8px;background:#292929;border:1.5px solid #333;color:#666;font-size:22.75px;line-height:50px;padding-left:14px">Auto</div>
<div class="plabel" style="top:534.3px;letter-spacing:0.25px">Max width</div>
<div class="pdesc" style="top:569.1px;letter-spacing:0px">Maximum width before</div>
<div class="pdesc" style="top:591.7px;letter-spacing:0px">text wraps (px)</div>
<div class="trk" style="top:569.5px"></div>
<div class="thm" style="left:3526.8px;top:557.5px"></div>
<div class="pcard" style="top:659.2px;height:150px"><div class="hd"></div></div>
<svg style="position:absolute;left:3252.9px;top:679.0px;color:#7d7d7d;" width="24.5" height="24.5" viewBox="0 0 24 24" fill="none" stroke="currentColor" stroke-width="1.6" stroke-linecap="round" stroke-linejoin="round"><path d="m6 9 6 6 6-6"/></svg>
<div class="ptitle" style="top:676.7px">Default fill</div>
<div class="btn" style="left:3622.5px;top:670.9000000000001px;width:41.2px;height:40.4px;justify-content:center"></div>
<svg class="abs" style="left:3626.3px;top:675.9000000000001px" width="32" height="32" viewBox="-16 -16 32 32"><path d="M0.6 -8.100A8.100 8.100 0 1 1 -8.100 0" fill="none" stroke="#dcdcdc" stroke-width="2.45"/><path d="M-4.900 -7.800L1.100 -13.200V-2.500Z" fill="#dcdcdc"/></svg>
<div class="plabel" style="top:744.0px;letter-spacing:0px">Color</div>
<div class="sw" style="top:732.5px;background:#1e3a5f;"></div>
<div class="pcard" style="top:827.4px;height:288.3px"><div class="hd"></div></div>
<svg style="position:absolute;left:3252.9px;top:847.1px;color:#7d7d7d;" width="24.5" height="24.5" viewBox="0 0 24 24" fill="none" stroke="currentColor" stroke-width="1.6" stroke-linecap="round" stroke-linejoin="round"><path d="m6 9 6 6 6-6"/></svg>
<div class="ptitle" style="top:844.9px">Default border</div>
<div class="btn" style="left:3622.5px;top:839.1px;width:41.2px;height:40.4px;justify-content:center"></div>
<svg class="abs" style="left:3626.3px;top:844.1px" width="32" height="32" viewBox="-16 -16 32 32"><path d="M0.6 -8.100A8.100 8.100 0 1 1 -8.100 0" fill="none" stroke="#dcdcdc" stroke-width="2.45"/><path d="M-4.900 -7.800L1.100 -13.200V-2.500Z" fill="#dcdcdc"/></svg>
<div class="plabel" style="top:911.0px;letter-spacing:0px">Color</div>
<div class="sw" style="top:900.4px;background:#3a6ea5;"></div>
<div class="plabel" style="top:979.0px;letter-spacing:0.5px">Width</div>
<div class="trk" style="top:988.7px"></div>
<div class="thm" style="left:3503.4px;top:976.7px"></div>
<div class="plabel" style="top:1048.0px;letter-spacing:-0.6px">Style</div>
<div class="btn" style="left:3526px;top:1035.1px;width:137.8px;height:51.6px;padding-left:18px;letter-spacing:0px">Solid</div>
<svg style="position:absolute;left:3629.6px;top:1049.9px;color:#bdbdbd;" width="22" height="22" viewBox="0 0 24 24" fill="none" stroke="currentColor" stroke-width="2.1" stroke-linecap="round" stroke-linejoin="round"><path d="m7 15 5 5 5-5"/><path d="m7 9 5-5 5 5"/></svg>
<div class="pcard" style="top:1132.3px;height:449.3px"><div class="hd"></div></div>
<svg style="position:absolute;left:3252.9px;top:1152.0px;color:#7d7d7d;" width="24.5" height="24.5" viewBox="0 0 24 24" fill="none" stroke="currentColor" stroke-width="1.6" stroke-linecap="round" stroke-linejoin="round"><path d="m6 9 6 6 6-6"/></svg>
<div class="ptitle" style="top:1149.8px">Default text</div>
<div class="btn" style="left:3622.5px;top:1144.0px;width:41.2px;height:40.4px;justify-content:center"></div>
<svg class="abs" style="left:3626.3px;top:1149.0px" width="32" height="32" viewBox="-16 -16 32 32"><path d="M0.6 -8.100A8.100 8.100 0 1 1 -8.100 0" fill="none" stroke="#dcdcdc" stroke-width="2.45"/><path d="M-4.900 -7.800L1.100 -13.200V-2.500Z" fill="#dcdcdc"/></svg>
<div class="plabel" style="top:1219.3px;letter-spacing:0px">Font family</div>
<div class="btn" style="left:3561.4px;top:1205.9px;width:102.4px;height:51.7px;padding-left:15px">Default</div>
<div class="plabel" style="top:1287.8px;letter-spacing:0px">Size</div>
<div class="trk" style="top:1297.3px"></div>
<div class="thm" style="left:3507.2px;top:1285.3px"></div>
<div class="plabel" style="top:1356.9px;letter-spacing:0px">Weight</div>
<div class="btn" style="left:3527.2px;top:1343.5px;width:136.6px;height:52px;padding-left:18.5px;letter-spacing:0px">Normal</div>
<svg style="position:absolute;left:3629.6px;top:1358.5px;color:#bdbdbd;" width="22" height="22" viewBox="0 0 24 24" fill="none" stroke="currentColor" stroke-width="2.1" stroke-linecap="round" stroke-linejoin="round"><path d="m7 15 5 5 5-5"/><path d="m7 9 5-5 5 5"/></svg>
<div class="plabel" style="top:1434.6px;letter-spacing:0px">Color</div>
<div class="sw" style="top:1424.4px;background:#d6e4f0;"></div>
<div class="plabel" style="top:1513.7px;letter-spacing:0px">Alignment</div>
<div class="btn" style="left:3407px;top:1501px;width:62.0px;height:52px;background:#8a5cf5"></div>
<svg style="position:absolute;left:3422.2px;top:1511.2px;color:#fff;" width="31.5" height="31.5" viewBox="0 0 24 24" fill="none" stroke="currentColor" stroke-width="1.75" stroke-linecap="round" stroke-linejoin="round"><path d="M21 6H3"/><path d="M15 12H3"/><path d="M17 18H3"/></svg>
<div class="btn" style="left:3472.6px;top:1501px;width:61.0px;height:52px;background:#363636"></div>
<svg style="position:absolute;left:3487.3px;top:1511.2px;color:#dadada;" width="31.5" height="31.5" viewBox="0 0 24 24" fill="none" stroke="currentColor" stroke-width="1.75" stroke-linecap="round" stroke-linejoin="round"><path d="M21 6H3"/><path d="M17 12H7"/><path d="M19 18H5"/></svg>
<div class="btn" style="left:3537.5px;top:1501px;width:60.9px;height:52px;background:#363636"></div>
<svg style="position:absolute;left:3552.2px;top:1511.2px;color:#dadada;" width="31.5" height="31.5" viewBox="0 0 24 24" fill="none" stroke="currentColor" stroke-width="1.75" stroke-linecap="round" stroke-linejoin="round"><path d="M21 6H3"/><path d="M21 12H9"/><path d="M21 18H7"/></svg>
<div class="btn" style="left:3602.4px;top:1501px;width:61.3px;height:52px;background:#363636"></div>
<svg style="position:absolute;left:3617.3px;top:1511.2px;color:#dadada;" width="31.5" height="31.5" viewBox="0 0 24 24" fill="none" stroke="currentColor" stroke-width="1.75" stroke-linecap="round" stroke-linejoin="round"><path d="M3 6h18"/><path d="M3 12h18"/><path d="M3 18h18"/></svg>
<div class="pcard" style="top:1599.6px;height:448.7px"><div class="hd"></div></div>
<svg style="position:absolute;left:3252.9px;top:1619.3px;color:#7d7d7d;" width="24.5" height="24.5" viewBox="0 0 24 24" fill="none" stroke="currentColor" stroke-width="1.6" stroke-linecap="round" stroke-linejoin="round"><path d="m6 9 6 6 6-6"/></svg>
<div class="ptitle" style="top:1617.1px">Branch line</div>
<div class="btn" style="left:3622.5px;top:1611.3px;width:41.2px;height:40.4px;justify-content:center"></div>
<svg class="abs" style="left:3626.3px;top:1616.3px" width="32" height="32" viewBox="-16 -16 32 32"><path d="M0.6 -8.100A8.100 8.100 0 1 1 -8.100 0" fill="none" stroke="#dcdcdc" stroke-width="2.45"/><path d="M-4.900 -7.800L1.100 -13.200V-2.500Z" fill="#dcdcdc"/></svg>
<div class="plabel" style="top:1685.2px;letter-spacing:-0.6px">Style</div>
<div class="btn" style="left:3444px;top:1672.6px;width:219.8px;height:51.4px;padding-left:18px;letter-spacing:0px">Curved</div>
<svg style="position:absolute;left:3629.6px;top:1687.3px;color:#bdbdbd;" width="22" height="22" viewBox="0 0 24 24" fill="none" stroke="currentColor" stroke-width="2.1" stroke-linecap="round" stroke-linejoin="round"><path d="m7 15 5 5 5-5"/><path d="m7 9 5-5 5 5"/></svg>
<div class="plabel" style="top:1764.0px;letter-spacing:0px">Color</div>
<div class="sw" style="top:1752.4px;background:#5a9fd4;"></div>
<div class="plabel" style="top:1831.0px;letter-spacing:-0.65px">Thickness</div>
<div class="trk" style="top:1840.9px"></div>
<div class="thm" style="left:3547.0px;top:1828.9px"></div>
<div class="plabel" style="top:1899.9px;letter-spacing:-0.3px">Pattern</div>
<div class="btn" style="left:3526px;top:1887.6px;width:137.8px;height:51.4px;padding-left:18px;letter-spacing:0px">Solid</div>
<svg style="position:absolute;left:3629.6px;top:1902.3px;color:#bdbdbd;" width="22" height="22" viewBox="0 0 24 24" fill="none" stroke="currentColor" stroke-width="2.1" stroke-linecap="round" stroke-linejoin="round"><path d="m7 15 5 5 5-5"/><path d="m7 9 5-5 5 5"/></svg>
<div class="plabel" style="top:1981.3px;letter-spacing:-0.4px">Taper</div>
<div class="btn" style="left:3407.9px;top:1967.6px;width:255.9px;height:52px;padding-left:18px;letter-spacing:0.15px">Grow (thin to thick)</div>
<svg style="position:absolute;left:3629.6px;top:1982.6px;color:#bdbdbd;" width="22" height="22" viewBox="0 0 24 24" fill="none" stroke="currentColor" stroke-width="2.1" stroke-linecap="round" stroke-linejoin="round"><path d="m7 15 5 5 5-5"/><path d="m7 9 5-5 5 5"/></svg>
<div class="btn" style="left:3241.3px;top:2071.3px;width:433.3px;height:50.5px;justify-content:center;letter-spacing:-.6px">Reset all styles</div>
<div class="abs" style="left:3668px;top:2118.5px;width:70px;height:50px;background:#262626;border:1.5px solid #363636;border-radius:11px 0 0 0"></div>
<svg style="position:absolute;left:3682.5px;top:2126.9px;color:#e5484d;" width="27" height="27" viewBox="0 0 24 24" fill="none" stroke="currentColor" stroke-width="2" stroke-linecap="round" stroke-linejoin="round"><path d="M21 8L18.740 5.740A9.750 9.750 0 0 0 12 3C11 3 10.030 3.160 9.130 3.470"/><path d="M8 16H3v5"/><path d="M3 12C3 9.510 4 7.260 5.640 5.640"/><path d="m3 16 2.260 2.260A9.750 9.750 0 0 0 12 21c2.490 0 4.740-1 6.360-2.640"/><path d="M21 12c0 1-.160 1.970-.470 2.870"/><path d="M21 3v5h-5"/><path d="M22 22 2 2"/></svg>
</body></html>
